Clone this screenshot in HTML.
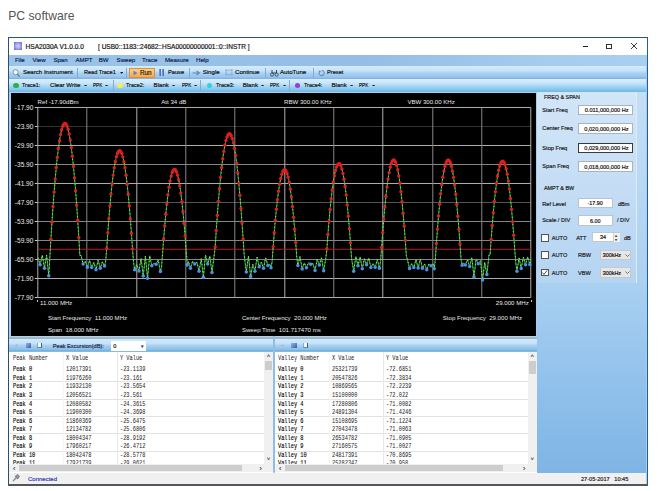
<!DOCTYPE html><html><head><meta charset="utf-8"><style>
html,body{margin:0;padding:0;}
body{width:661px;height:491px;overflow:hidden;position:relative;background:#fff;font-family:"Liberation Sans",sans-serif;}
.t{position:absolute;white-space:pre;-webkit-text-stroke:0.18px currentColor;}
.r{position:absolute;box-sizing:border-box;}
svg{position:absolute;}
</style></head><body>
<div class="t" style="left:8.20px;top:10.00px;font-size:12.2px;line-height:12.2px;color:#555;font-family:'Liberation Sans', sans-serif;font-weight:normal;-webkit-text-stroke:0;">PC software</div>
<div class="r" style="left:7.90px;top:37.00px;width:640.10px;height:449.00px;background:#a9cdef;border:1px solid #2a5878;border-left:1.5px solid #2a5070;border-right:1.8px solid #24608e;border-bottom:1px solid #505860;"></div>
<div class="r" style="left:9.00px;top:38.00px;width:638.00px;height:16.50px;background:#fff;"></div>
<div class="r" style="left:14.00px;top:42.00px;width:8.40px;height:7.90px;background:radial-gradient(circle,#d0d4fa 0%,#a4a8ee 45%,#7476dc 80%);"></div>
<div class="t" style="left:25.60px;top:44.00px;font-size:6.55px;line-height:6.55px;color:#111;font-family:'Liberation Sans', sans-serif;font-weight:normal;">HSA2030A V1.0.0.0</div>
<div class="t" style="left:98.00px;top:44.00px;font-size:6.55px;line-height:6.55px;color:#111;font-family:'Liberation Sans', sans-serif;font-weight:normal;">[ USB0::1183::24682::HSA00000000001::0::INSTR ]</div>
<div class="r" style="left:582.50px;top:46.00px;width:5.50px;height:1.00px;background:#222;"></div>
<div class="r" style="left:606.30px;top:43.50px;width:5.70px;height:5.50px;border:0.9px solid #333;"></div>
<svg style="left:630px;top:42px" width="8" height="8" viewBox="0 0 8 8"><path d="M1 1L7 7M7 1L1 7" stroke="#222" stroke-width="0.9"/></svg>
<div class="r" style="left:9.40px;top:54.60px;width:637.00px;height:11.70px;background:linear-gradient(to right,#9cc4ea,#94bee6 55%,#a6ccee 85%,#a8cef0);"></div>
<div class="t" style="left:14.90px;top:57.00px;font-size:6.1px;line-height:6.1px;color:#142448;font-family:'Liberation Sans', sans-serif;font-weight:normal;">File</div>
<div class="t" style="left:32.50px;top:57.00px;font-size:6.1px;line-height:6.1px;color:#142448;font-family:'Liberation Sans', sans-serif;font-weight:normal;">View</div>
<div class="t" style="left:53.40px;top:57.00px;font-size:6.1px;line-height:6.1px;color:#142448;font-family:'Liberation Sans', sans-serif;font-weight:normal;">Span</div>
<div class="t" style="left:75.50px;top:57.00px;font-size:6.1px;line-height:6.1px;color:#142448;font-family:'Liberation Sans', sans-serif;font-weight:normal;">AMPT</div>
<div class="t" style="left:98.80px;top:57.00px;font-size:6.1px;line-height:6.1px;color:#142448;font-family:'Liberation Sans', sans-serif;font-weight:normal;">BW</div>
<div class="t" style="left:116.60px;top:57.00px;font-size:6.1px;line-height:6.1px;color:#142448;font-family:'Liberation Sans', sans-serif;font-weight:normal;">Sweep</div>
<div class="t" style="left:142.00px;top:57.00px;font-size:6.1px;line-height:6.1px;color:#142448;font-family:'Liberation Sans', sans-serif;font-weight:normal;">Trace</div>
<div class="t" style="left:165.00px;top:57.00px;font-size:6.1px;line-height:6.1px;color:#142448;font-family:'Liberation Sans', sans-serif;font-weight:normal;">Measure</div>
<div class="t" style="left:196.00px;top:57.00px;font-size:6.1px;line-height:6.1px;color:#142448;font-family:'Liberation Sans', sans-serif;font-weight:normal;">Help</div>
<div class="r" style="left:9.40px;top:66.30px;width:637.00px;height:12.90px;background:linear-gradient(#d4ebfb 0%,#c6e3f9 35%,#a8d2f4 55%,#9ac7f0 80%,#80b2e0 100%);"></div>
<div class="r" style="left:9.40px;top:79.20px;width:637.00px;height:13.30px;background:linear-gradient(#dceefc 0%,#c8e6fa 30%,#a6d5f6 55%,#86c6ee 80%,#6cb8e4 100%);"></div>
<svg style="left:11px;top:68px" width="10" height="10" viewBox="0 0 10 10"><circle cx="4.6" cy="4.2" r="2.6" fill="#eef4fa" stroke="#7a8898" stroke-width="0.9"/><path d="M6.4 6.2L8.6 8.6" stroke="#6a7480" stroke-width="1.2"/></svg>
<div class="t" style="left:22.90px;top:69.00px;font-size:6.1px;line-height:6.1px;color:#111;font-family:'Liberation Sans', sans-serif;font-weight:normal;">Search Instrument</div>
<div class="r" style="left:77.30px;top:68.00px;width:0.60px;height:9.50px;background:#8aa8c8;"></div>
<div class="t" style="left:84.00px;top:69.00px;font-size:6.1px;line-height:6.1px;color:#111;font-family:'Liberation Sans', sans-serif;font-weight:normal;transform:scaleX(0.91);transform-origin:0 0;">Read Trace1</div>
<svg style="left:120.10px;top:71.75px" width="3.2" height="1.9" viewBox="0 0 3.2 1.9"><path d="M0 0H3.2L1.6 1.9Z" fill="#222"/></svg>
<div class="r" style="left:126.20px;top:68.00px;width:0.60px;height:9.50px;background:#8aa8c8;"></div>
<div class="r" style="left:129.00px;top:67.60px;width:26.00px;height:10.60px;background:linear-gradient(#fbcf8c,#f5a850);border:1px solid #d89040;"></div>
<svg style="left:132.5px;top:70px" width="5" height="6" viewBox="0 0 5 6"><path d="M0.5 0.5L4.5 3L0.5 5.5Z" fill="#6b7fd0"/></svg>
<div class="t" style="left:140.00px;top:70.00px;font-size:6.3px;line-height:6.3px;color:#2a1a00;font-family:'Liberation Sans', sans-serif;font-weight:normal;">Run</div>
<div class="r" style="left:158.80px;top:69.30px;width:2.00px;height:6.90px;background:linear-gradient(90deg,#8aa0d8,#4060a8);"></div>
<div class="r" style="left:161.80px;top:69.30px;width:2.00px;height:6.90px;background:linear-gradient(90deg,#8aa0d8,#4060a8);"></div>
<div class="t" style="left:167.60px;top:69.00px;font-size:6.1px;line-height:6.1px;color:#111;font-family:'Liberation Sans', sans-serif;font-weight:normal;transform:scaleX(0.93);transform-origin:0 0;">Pause</div>
<div class="r" style="left:188.50px;top:68.00px;width:0.60px;height:9.50px;background:#8aa8c8;"></div>
<svg style="left:192px;top:69.5px" width="9" height="6" viewBox="0 0 9 6"><path d="M0.5 3H6M4.5 1L7.5 3L4.5 5" stroke="#6080b8" stroke-width="1.1" fill="none"/></svg>
<div class="t" style="left:202.70px;top:69.00px;font-size:6.1px;line-height:6.1px;color:#111;font-family:'Liberation Sans', sans-serif;font-weight:normal;">Single</div>
<svg style="left:225px;top:69px" width="8" height="7" viewBox="0 0 8 7"><path d="M0.5 1.2H7.5M0.5 5.8H7.5M1.2 0.5V6.5M6.8 0.5V6.5" stroke="#7090c0" stroke-width="0.9" stroke-dasharray="1.2 0.8" fill="none"/></svg>
<div class="t" style="left:235.00px;top:69.00px;font-size:6.1px;line-height:6.1px;color:#111;font-family:'Liberation Sans', sans-serif;font-weight:normal;">Continue</div>
<div class="r" style="left:265.30px;top:68.00px;width:0.60px;height:9.50px;background:#8aa8c8;"></div>
<svg style="left:270px;top:68.5px" width="9" height="8" viewBox="0 0 9 8"><path d="M2 1V4M6.5 1V4M2 4H6.5" stroke="#3a4658" stroke-width="1" fill="none"/><circle cx="2" cy="5.6" r="1.6" fill="none" stroke="#3a4658" stroke-width="0.9"/><circle cx="6.6" cy="5.6" r="1.6" fill="none" stroke="#3a4658" stroke-width="0.9"/></svg>
<div class="t" style="left:280.00px;top:69.00px;font-size:6.1px;line-height:6.1px;color:#111;font-family:'Liberation Sans', sans-serif;font-weight:normal;">AutoTune</div>
<div class="r" style="left:312.50px;top:68.00px;width:0.60px;height:9.50px;background:#8aa8c8;"></div>
<svg style="left:317.5px;top:69px" width="7" height="8" viewBox="0 0 7 8"><path d="M3.5 1.5A2.6 2.6 0 1 1 1.2 3.2" stroke="#5a78b0" stroke-width="0.9" fill="none"/><path d="M0.5 1.5L1.5 3.6L3 2.2Z" fill="#5a78b0"/></svg>
<div class="t" style="left:326.70px;top:69.00px;font-size:6.1px;line-height:6.1px;color:#111;font-family:'Liberation Sans', sans-serif;font-weight:normal;transform:scaleX(0.93);transform-origin:0 0;">Preset</div>
<div class="r" style="left:13.40px;top:82.50px;width:5.60px;height:5.60px;border-radius:50%;background:#2ab24a;"></div>
<div class="t" style="left:22.00px;top:82.00px;font-size:6.1px;line-height:6.1px;color:#111;font-family:'Liberation Sans', sans-serif;font-weight:normal;transform:scaleX(0.89);transform-origin:0 0;">Trace1:</div>
<div class="t" style="left:50.00px;top:82.00px;font-size:6.1px;line-height:6.1px;color:#111;font-family:'Liberation Sans', sans-serif;font-weight:normal;">Clear Write</div>
<svg style="left:84.20px;top:84.55px" width="3.2" height="1.9" viewBox="0 0 3.2 1.9"><path d="M0 0H3.2L1.6 1.9Z" fill="#222"/></svg>
<div class="t" style="left:93.00px;top:82.00px;font-size:6.1px;line-height:6.1px;color:#111;font-family:'Liberation Sans', sans-serif;font-weight:normal;transform:scaleX(0.76);transform-origin:0 0;">PPK</div>
<svg style="left:105.40px;top:84.55px" width="3.2" height="1.9" viewBox="0 0 3.2 1.9"><path d="M0 0H3.2L1.6 1.9Z" fill="#222"/></svg>
<div class="r" style="left:112.80px;top:80.00px;width:0.60px;height:10.50px;background:#8aa8c8;"></div>
<div class="r" style="left:117.40px;top:82.50px;width:5.60px;height:5.60px;border-radius:50%;background:#f0ee60;"></div>
<div class="t" style="left:126.40px;top:82.00px;font-size:6.1px;line-height:6.1px;color:#111;font-family:'Liberation Sans', sans-serif;font-weight:normal;transform:scaleX(0.89);transform-origin:0 0;">Trace2:</div>
<div class="t" style="left:153.60px;top:82.00px;font-size:6.1px;line-height:6.1px;color:#111;font-family:'Liberation Sans', sans-serif;font-weight:normal;">Blank</div>
<svg style="left:172.40px;top:84.55px" width="3.2" height="1.9" viewBox="0 0 3.2 1.9"><path d="M0 0H3.2L1.6 1.9Z" fill="#222"/></svg>
<div class="t" style="left:181.80px;top:82.00px;font-size:6.1px;line-height:6.1px;color:#111;font-family:'Liberation Sans', sans-serif;font-weight:normal;transform:scaleX(0.76);transform-origin:0 0;">PPK</div>
<svg style="left:194.40px;top:84.55px" width="3.2" height="1.9" viewBox="0 0 3.2 1.9"><path d="M0 0H3.2L1.6 1.9Z" fill="#222"/></svg>
<div class="r" style="left:200.00px;top:80.00px;width:0.60px;height:10.50px;background:#8aa8c8;"></div>
<div class="r" style="left:206.60px;top:82.50px;width:5.60px;height:5.60px;border-radius:50%;background:#30d0e8;"></div>
<div class="t" style="left:215.50px;top:82.00px;font-size:6.1px;line-height:6.1px;color:#111;font-family:'Liberation Sans', sans-serif;font-weight:normal;transform:scaleX(0.89);transform-origin:0 0;">Trace3:</div>
<div class="t" style="left:242.70px;top:82.00px;font-size:6.1px;line-height:6.1px;color:#111;font-family:'Liberation Sans', sans-serif;font-weight:normal;">Blank</div>
<svg style="left:261.40px;top:84.55px" width="3.2" height="1.9" viewBox="0 0 3.2 1.9"><path d="M0 0H3.2L1.6 1.9Z" fill="#222"/></svg>
<div class="t" style="left:269.50px;top:82.00px;font-size:6.1px;line-height:6.1px;color:#111;font-family:'Liberation Sans', sans-serif;font-weight:normal;transform:scaleX(0.76);transform-origin:0 0;">PPK</div>
<svg style="left:282.90px;top:84.55px" width="3.2" height="1.9" viewBox="0 0 3.2 1.9"><path d="M0 0H3.2L1.6 1.9Z" fill="#222"/></svg>
<div class="r" style="left:289.30px;top:80.00px;width:0.60px;height:10.50px;background:#8aa8c8;"></div>
<div class="r" style="left:294.70px;top:82.50px;width:5.60px;height:5.60px;border-radius:50%;background:#9a3ae0;"></div>
<div class="t" style="left:304.00px;top:82.00px;font-size:6.1px;line-height:6.1px;color:#111;font-family:'Liberation Sans', sans-serif;font-weight:normal;transform:scaleX(0.89);transform-origin:0 0;">Trace4:</div>
<div class="t" style="left:331.50px;top:82.00px;font-size:6.1px;line-height:6.1px;color:#111;font-family:'Liberation Sans', sans-serif;font-weight:normal;">Blank</div>
<svg style="left:350.40px;top:84.55px" width="3.2" height="1.9" viewBox="0 0 3.2 1.9"><path d="M0 0H3.2L1.6 1.9Z" fill="#222"/></svg>
<div class="t" style="left:358.70px;top:82.00px;font-size:6.1px;line-height:6.1px;color:#111;font-family:'Liberation Sans', sans-serif;font-weight:normal;transform:scaleX(0.76);transform-origin:0 0;">PPK</div>
<svg style="left:372.00px;top:84.55px" width="3.2" height="1.9" viewBox="0 0 3.2 1.9"><path d="M0 0H3.2L1.6 1.9Z" fill="#222"/></svg>
<div class="r" style="left:10.90px;top:92.50px;width:525.10px;height:243.50px;background:#000;"></div>
<svg style="left:10.7px;top:92px" width="525.3" height="244.2" viewBox="10.7 92 525.3 244.2"><line x1="37.7" y1="107.5" x2="530.6" y2="107.5" stroke="#b0b0b0" stroke-width="1"/><line x1="34.5" y1="107.5" x2="37.7" y2="107.5" stroke="#c8c8c8" stroke-width="1"/><line x1="37.7" y1="126.5" x2="530.6" y2="126.5" stroke="#333333" stroke-width="1"/><line x1="34.5" y1="126.5" x2="37.7" y2="126.5" stroke="#c8c8c8" stroke-width="1"/><line x1="37.7" y1="145.5" x2="530.6" y2="145.5" stroke="#b0b0b0" stroke-width="1"/><line x1="34.5" y1="145.5" x2="37.7" y2="145.5" stroke="#c8c8c8" stroke-width="1"/><line x1="37.7" y1="164.5" x2="530.6" y2="164.5" stroke="#888888" stroke-width="1"/><line x1="34.5" y1="164.5" x2="37.7" y2="164.5" stroke="#c8c8c8" stroke-width="1"/><line x1="37.7" y1="183.5" x2="530.6" y2="183.5" stroke="#b0b0b0" stroke-width="1"/><line x1="34.5" y1="183.5" x2="37.7" y2="183.5" stroke="#c8c8c8" stroke-width="1"/><line x1="37.7" y1="202.5" x2="530.6" y2="202.5" stroke="#555555" stroke-width="1"/><line x1="34.5" y1="202.5" x2="37.7" y2="202.5" stroke="#c8c8c8" stroke-width="1"/><line x1="37.7" y1="221.5" x2="530.6" y2="221.5" stroke="#888888" stroke-width="1"/><line x1="34.5" y1="221.5" x2="37.7" y2="221.5" stroke="#c8c8c8" stroke-width="1"/><line x1="37.7" y1="240.5" x2="530.6" y2="240.5" stroke="#888888" stroke-width="1"/><line x1="34.5" y1="240.5" x2="37.7" y2="240.5" stroke="#c8c8c8" stroke-width="1"/><line x1="37.7" y1="259.5" x2="530.6" y2="259.5" stroke="#888888" stroke-width="1"/><line x1="34.5" y1="259.5" x2="37.7" y2="259.5" stroke="#c8c8c8" stroke-width="1"/><line x1="37.7" y1="278.5" x2="530.6" y2="278.5" stroke="#b0b0b0" stroke-width="1"/><line x1="34.5" y1="278.5" x2="37.7" y2="278.5" stroke="#c8c8c8" stroke-width="1"/><line x1="37.7" y1="297.5" x2="530.6" y2="297.5" stroke="#b0b0b0" stroke-width="1"/><line x1="34.5" y1="297.5" x2="37.7" y2="297.5" stroke="#c8c8c8" stroke-width="1"/><line x1="37.5" y1="107.5" x2="37.5" y2="297.5" stroke="#b0b0b0" stroke-width="1"/><line x1="86.5" y1="107.5" x2="86.5" y2="297.5" stroke="#888888" stroke-width="1"/><line x1="136.5" y1="107.5" x2="136.5" y2="297.5" stroke="#b0b0b0" stroke-width="1"/><line x1="185.5" y1="107.5" x2="185.5" y2="297.5" stroke="#888888" stroke-width="1"/><line x1="234.5" y1="107.5" x2="234.5" y2="297.5" stroke="#888888" stroke-width="1"/><line x1="284.5" y1="107.5" x2="284.5" y2="297.5" stroke="#b0b0b0" stroke-width="1"/><line x1="333.5" y1="107.5" x2="333.5" y2="297.5" stroke="#888888" stroke-width="1"/><line x1="382.5" y1="107.5" x2="382.5" y2="297.5" stroke="#b0b0b0" stroke-width="1"/><line x1="432.5" y1="107.5" x2="432.5" y2="297.5" stroke="#888888" stroke-width="1"/><line x1="481.5" y1="107.5" x2="481.5" y2="297.5" stroke="#888888" stroke-width="1"/><line x1="530.5" y1="107.5" x2="530.5" y2="297.5" stroke="#b0b0b0" stroke-width="1"/><line x1="37.7" y1="249.3" x2="530.6" y2="249.3" stroke="#b81818" stroke-width="1.1"/><path d="M37.70 257.74 L38.77 261.30 L39.85 264.86 L40.92 260.04 L42.00 255.22 L43.07 261.77 L44.14 268.32 L45.22 261.70 L46.29 255.08 L47.36 265.42 L48.44 275.75 L49.51 257.70 L50.59 239.27 L51.66 222.19 L52.73 206.47 L53.81 192.12 L54.88 179.12 L55.96 167.49 L57.03 157.22 L58.10 148.30 L59.18 140.75 L60.25 134.56 L61.32 129.73 L62.40 126.26 L63.47 124.15 L64.55 123.40 L65.62 124.01 L66.69 125.99 L67.77 129.32 L68.84 134.02 L69.92 140.07 L70.99 147.49 L72.06 156.26 L73.14 166.40 L74.21 177.90 L75.28 190.76 L76.36 204.98 L77.43 220.56 L78.51 237.50 L79.58 255.80 L80.65 255.13 L81.73 259.58 L82.80 264.04 L83.88 262.67 L84.95 261.30 L86.02 264.33 L87.10 267.35 L88.17 263.85 L89.25 260.36 L90.32 263.97 L91.39 267.58 L92.47 265.01 L93.54 262.44 L94.61 266.12 L95.69 269.79 L96.76 265.02 L97.84 260.24 L98.91 264.24 L99.98 268.23 L101.06 265.01 L102.13 261.79 L103.21 263.94 L104.28 266.09 L105.35 260.89 L106.43 248.47 L107.50 232.84 L108.57 218.57 L109.65 205.66 L110.72 194.11 L111.80 183.92 L112.87 175.09 L113.94 167.63 L115.02 161.52 L116.09 156.77 L117.17 153.39 L118.24 151.36 L119.31 150.70 L120.39 151.40 L121.46 153.45 L122.53 156.87 L123.61 161.65 L124.68 167.79 L125.76 175.29 L126.83 184.15 L127.90 194.38 L128.98 205.96 L130.05 218.90 L131.13 233.21 L132.20 248.87 L133.27 262.46 L134.35 269.81 L135.42 267.12 L136.49 264.43 L137.57 267.66 L138.64 270.90 L139.72 264.63 L140.79 258.36 L141.86 267.16 L142.94 275.96 L144.01 266.07 L145.09 256.18 L146.16 267.22 L147.23 278.26 L148.31 267.03 L149.38 255.79 L150.45 260.76 L151.53 265.73 L152.60 264.47 L153.68 263.21 L154.75 263.72 L155.82 264.23 L156.90 262.11 L157.97 259.99 L159.05 265.72 L160.12 271.45 L161.19 267.30 L162.27 253.51 L163.34 239.07 L164.42 225.99 L165.49 214.27 L166.56 203.91 L167.64 194.92 L168.71 187.28 L169.78 181.00 L170.86 176.09 L171.93 172.53 L173.01 170.34 L174.08 169.51 L175.15 170.04 L176.23 171.93 L177.30 175.17 L178.38 179.78 L179.45 185.76 L180.52 193.09 L181.60 201.78 L182.67 211.83 L183.74 223.25 L184.82 236.02 L185.89 250.16 L186.97 265.00 L188.04 261.40 L189.11 264.77 L190.19 268.14 L191.26 264.70 L192.34 261.26 L193.41 262.62 L194.48 263.99 L195.56 263.14 L196.63 262.30 L197.70 266.84 L198.78 271.37 L199.85 264.90 L200.93 258.42 L202.00 267.84 L203.07 277.26 L204.15 266.19 L205.22 255.12 L206.30 259.61 L207.37 264.11 L208.44 260.11 L209.52 256.12 L210.59 264.31 L211.66 272.50 L212.74 264.26 L213.81 256.01 L214.89 246.84 L215.96 230.39 L217.03 215.23 L218.11 201.36 L219.18 188.79 L220.26 177.51 L221.33 167.51 L222.40 158.81 L223.48 151.41 L224.55 145.29 L225.62 140.46 L226.70 136.93 L227.77 134.69 L228.85 133.74 L229.92 134.08 L230.99 135.71 L232.07 138.63 L233.14 142.85 L234.22 148.36 L235.29 155.15 L236.36 163.24 L237.44 172.63 L238.51 183.30 L239.58 195.26 L240.66 208.52 L241.73 223.07 L242.81 238.91 L243.88 254.73 L244.95 263.39 L246.03 272.06 L247.10 264.01 L248.18 255.97 L249.25 266.21 L250.32 276.46 L251.40 270.37 L252.47 264.29 L253.55 267.78 L254.62 271.27 L255.69 264.19 L256.77 257.11 L257.84 261.96 L258.91 266.80 L259.99 264.51 L261.06 262.22 L262.14 265.26 L263.21 268.29 L264.28 263.04 L265.36 257.80 L266.43 261.65 L267.51 265.51 L268.58 264.93 L269.65 264.35 L270.73 267.76 L271.80 261.78 L272.87 246.62 L273.95 232.82 L275.02 220.39 L276.10 209.31 L277.17 199.59 L278.24 191.24 L279.32 184.25 L280.39 178.61 L281.47 174.34 L282.54 171.43 L283.61 169.88 L284.69 169.69 L285.76 170.86 L286.83 173.39 L287.91 177.28 L288.98 182.54 L290.06 189.15 L291.13 197.12 L292.20 206.46 L293.28 217.15 L294.35 229.21 L295.43 242.63 L296.50 257.41 L297.57 265.54 L298.65 261.04 L299.72 256.54 L300.79 262.83 L301.87 269.12 L302.94 266.01 L304.02 262.90 L305.09 265.36 L306.16 267.82 L307.24 265.16 L308.31 262.50 L309.39 263.38 L310.46 264.26 L311.53 263.93 L312.61 263.60 L313.68 267.07 L314.75 270.54 L315.83 264.91 L316.90 259.28 L317.98 262.19 L319.05 265.11 L320.12 261.47 L321.20 257.83 L322.27 264.27 L323.35 270.71 L324.42 264.58 L325.49 258.46 L326.57 249.02 L327.64 234.46 L328.72 221.25 L329.79 209.41 L330.86 198.92 L331.94 189.80 L333.01 182.03 L334.08 175.63 L335.16 170.59 L336.23 166.91 L337.31 164.59 L338.38 163.63 L339.45 164.03 L340.53 165.79 L341.60 168.91 L342.68 173.40 L343.75 179.24 L344.82 186.45 L345.90 195.01 L346.97 204.94 L348.04 216.23 L349.12 228.87 L350.19 242.88 L351.27 258.25 L352.34 265.09 L353.41 271.35 L354.49 263.98 L355.56 256.61 L356.64 261.19 L357.71 265.77 L358.78 261.34 L359.86 256.91 L360.93 262.84 L362.00 268.78 L363.08 263.73 L364.15 258.69 L365.23 261.68 L366.30 264.68 L367.37 261.36 L368.45 258.04 L369.52 262.83 L370.60 267.62 L371.67 265.58 L372.74 263.54 L373.82 265.41 L374.89 267.29 L375.96 263.40 L377.04 259.52 L378.11 263.90 L379.19 268.29 L380.26 261.49 L381.33 247.35 L382.41 232.50 L383.48 219.02 L384.56 206.93 L385.63 196.23 L386.70 186.91 L387.78 178.97 L388.85 172.42 L389.92 167.25 L391.00 163.46 L392.07 161.06 L393.15 160.04 L394.22 160.40 L395.29 162.15 L396.37 165.29 L397.44 169.80 L398.52 175.70 L399.59 182.99 L400.66 191.65 L401.74 201.71 L402.81 213.14 L403.88 225.96 L404.96 240.16 L406.03 255.75 L407.11 259.58 L408.18 264.07 L409.25 268.56 L410.33 266.09 L411.40 263.62 L412.48 265.56 L413.55 267.49 L414.62 263.52 L415.70 259.56 L416.77 263.83 L417.85 268.11 L418.92 263.57 L419.99 259.02 L421.07 263.66 L422.14 268.30 L423.21 266.11 L424.29 263.92 L425.36 266.85 L426.44 269.79 L427.51 266.86 L428.58 263.92 L429.66 264.88 L430.73 265.84 L431.81 264.88 L432.88 263.93 L433.95 268.67 L435.03 259.43 L436.10 243.53 L437.17 229.02 L438.25 215.89 L439.32 204.15 L440.40 193.79 L441.47 184.81 L442.54 177.21 L443.62 171.00 L444.69 166.18 L445.77 162.73 L446.84 160.68 L447.91 160.00 L448.99 160.71 L450.06 162.80 L451.13 166.28 L452.21 171.14 L453.28 177.38 L454.36 185.01 L455.43 194.02 L456.50 204.42 L457.58 216.20 L458.65 229.36 L459.73 243.91 L460.80 259.84 L461.87 265.35 L462.95 262.82 L464.02 263.89 L465.09 264.95 L466.17 262.30 L467.24 259.66 L468.32 263.10 L469.39 266.55 L470.46 262.12 L471.54 257.69 L472.61 267.17 L473.69 276.66 L474.76 267.78 L475.83 258.90 L476.91 261.28 L477.98 263.66 L479.05 262.20 L480.13 260.74 L481.20 270.31 L482.28 279.89 L483.35 271.14 L484.42 262.38 L485.50 268.44 L486.57 274.49 L487.65 264.69 L488.72 254.90 L489.79 254.95 L490.87 239.52 L491.94 225.48 L493.02 212.83 L494.09 201.55 L495.16 191.66 L496.24 183.16 L497.31 176.04 L498.38 170.30 L499.46 165.95 L500.53 162.98 L501.61 161.39 L502.68 161.19 L503.75 162.37 L504.83 164.93 L505.90 168.88 L506.98 174.21 L508.05 180.93 L509.12 189.03 L510.20 198.52 L511.27 209.38 L512.34 221.63 L513.42 235.27 L514.49 250.29 L515.57 263.22 L516.64 271.26 L517.71 264.58 L518.79 257.89 L519.86 263.18 L520.94 268.48 L522.01 262.83 L523.08 257.18 L524.16 260.92 L525.23 264.66 L526.30 260.77 L527.38 256.88 L528.45 260.68 L529.53 264.49 L530.60 259.74" fill="none" stroke="#30c030" stroke-width="0.9"/><path d="M37.70 257.74 L38.77 261.30 L39.85 264.86 L40.92 260.04 L42.00 255.22 L43.07 261.77 L44.14 268.32 L45.22 261.70 L46.29 255.08 L47.36 265.42 L48.44 275.75 L49.51 257.70 L50.59 239.27 L51.66 222.19 L52.73 206.47 L53.81 192.12 L54.88 179.12 L55.96 167.49 L57.03 157.22 L58.10 148.30 L59.18 140.75 L60.25 134.56 L61.32 129.73 L62.40 126.26 L63.47 124.15 L64.55 123.40 L65.62 124.01 L66.69 125.99 L67.77 129.32 L68.84 134.02 L69.92 140.07 L70.99 147.49 L72.06 156.26 L73.14 166.40 L74.21 177.90 L75.28 190.76 L76.36 204.98 L77.43 220.56 L78.51 237.50 L79.58 255.80 L80.65 255.13 L81.73 259.58 L82.80 264.04 L83.88 262.67 L84.95 261.30 L86.02 264.33 L87.10 267.35 L88.17 263.85 L89.25 260.36 L90.32 263.97 L91.39 267.58 L92.47 265.01 L93.54 262.44 L94.61 266.12 L95.69 269.79 L96.76 265.02 L97.84 260.24 L98.91 264.24 L99.98 268.23 L101.06 265.01 L102.13 261.79 L103.21 263.94 L104.28 266.09 L105.35 260.89 L106.43 248.47 L107.50 232.84 L108.57 218.57 L109.65 205.66 L110.72 194.11 L111.80 183.92 L112.87 175.09 L113.94 167.63 L115.02 161.52 L116.09 156.77 L117.17 153.39 L118.24 151.36 L119.31 150.70 L120.39 151.40 L121.46 153.45 L122.53 156.87 L123.61 161.65 L124.68 167.79 L125.76 175.29 L126.83 184.15 L127.90 194.38 L128.98 205.96 L130.05 218.90 L131.13 233.21 L132.20 248.87 L133.27 262.46 L134.35 269.81 L135.42 267.12 L136.49 264.43 L137.57 267.66 L138.64 270.90 L139.72 264.63 L140.79 258.36 L141.86 267.16 L142.94 275.96 L144.01 266.07 L145.09 256.18 L146.16 267.22 L147.23 278.26 L148.31 267.03 L149.38 255.79 L150.45 260.76 L151.53 265.73 L152.60 264.47 L153.68 263.21 L154.75 263.72 L155.82 264.23 L156.90 262.11 L157.97 259.99 L159.05 265.72 L160.12 271.45 L161.19 267.30 L162.27 253.51 L163.34 239.07 L164.42 225.99 L165.49 214.27 L166.56 203.91 L167.64 194.92 L168.71 187.28 L169.78 181.00 L170.86 176.09 L171.93 172.53 L173.01 170.34 L174.08 169.51 L175.15 170.04 L176.23 171.93 L177.30 175.17 L178.38 179.78 L179.45 185.76 L180.52 193.09 L181.60 201.78 L182.67 211.83 L183.74 223.25 L184.82 236.02 L185.89 250.16 L186.97 265.00 L188.04 261.40 L189.11 264.77 L190.19 268.14 L191.26 264.70 L192.34 261.26 L193.41 262.62 L194.48 263.99 L195.56 263.14 L196.63 262.30 L197.70 266.84 L198.78 271.37 L199.85 264.90 L200.93 258.42 L202.00 267.84 L203.07 277.26 L204.15 266.19 L205.22 255.12 L206.30 259.61 L207.37 264.11 L208.44 260.11 L209.52 256.12 L210.59 264.31 L211.66 272.50 L212.74 264.26 L213.81 256.01 L214.89 246.84 L215.96 230.39 L217.03 215.23 L218.11 201.36 L219.18 188.79 L220.26 177.51 L221.33 167.51 L222.40 158.81 L223.48 151.41 L224.55 145.29 L225.62 140.46 L226.70 136.93 L227.77 134.69 L228.85 133.74 L229.92 134.08 L230.99 135.71 L232.07 138.63 L233.14 142.85 L234.22 148.36 L235.29 155.15 L236.36 163.24 L237.44 172.63 L238.51 183.30 L239.58 195.26 L240.66 208.52 L241.73 223.07 L242.81 238.91 L243.88 254.73 L244.95 263.39 L246.03 272.06 L247.10 264.01 L248.18 255.97 L249.25 266.21 L250.32 276.46 L251.40 270.37 L252.47 264.29 L253.55 267.78 L254.62 271.27 L255.69 264.19 L256.77 257.11 L257.84 261.96 L258.91 266.80 L259.99 264.51 L261.06 262.22 L262.14 265.26 L263.21 268.29 L264.28 263.04 L265.36 257.80 L266.43 261.65 L267.51 265.51 L268.58 264.93 L269.65 264.35 L270.73 267.76 L271.80 261.78 L272.87 246.62 L273.95 232.82 L275.02 220.39 L276.10 209.31 L277.17 199.59 L278.24 191.24 L279.32 184.25 L280.39 178.61 L281.47 174.34 L282.54 171.43 L283.61 169.88 L284.69 169.69 L285.76 170.86 L286.83 173.39 L287.91 177.28 L288.98 182.54 L290.06 189.15 L291.13 197.12 L292.20 206.46 L293.28 217.15 L294.35 229.21 L295.43 242.63 L296.50 257.41 L297.57 265.54 L298.65 261.04 L299.72 256.54 L300.79 262.83 L301.87 269.12 L302.94 266.01 L304.02 262.90 L305.09 265.36 L306.16 267.82 L307.24 265.16 L308.31 262.50 L309.39 263.38 L310.46 264.26 L311.53 263.93 L312.61 263.60 L313.68 267.07 L314.75 270.54 L315.83 264.91 L316.90 259.28 L317.98 262.19 L319.05 265.11 L320.12 261.47 L321.20 257.83 L322.27 264.27 L323.35 270.71 L324.42 264.58 L325.49 258.46 L326.57 249.02 L327.64 234.46 L328.72 221.25 L329.79 209.41 L330.86 198.92 L331.94 189.80 L333.01 182.03 L334.08 175.63 L335.16 170.59 L336.23 166.91 L337.31 164.59 L338.38 163.63 L339.45 164.03 L340.53 165.79 L341.60 168.91 L342.68 173.40 L343.75 179.24 L344.82 186.45 L345.90 195.01 L346.97 204.94 L348.04 216.23 L349.12 228.87 L350.19 242.88 L351.27 258.25 L352.34 265.09 L353.41 271.35 L354.49 263.98 L355.56 256.61 L356.64 261.19 L357.71 265.77 L358.78 261.34 L359.86 256.91 L360.93 262.84 L362.00 268.78 L363.08 263.73 L364.15 258.69 L365.23 261.68 L366.30 264.68 L367.37 261.36 L368.45 258.04 L369.52 262.83 L370.60 267.62 L371.67 265.58 L372.74 263.54 L373.82 265.41 L374.89 267.29 L375.96 263.40 L377.04 259.52 L378.11 263.90 L379.19 268.29 L380.26 261.49 L381.33 247.35 L382.41 232.50 L383.48 219.02 L384.56 206.93 L385.63 196.23 L386.70 186.91 L387.78 178.97 L388.85 172.42 L389.92 167.25 L391.00 163.46 L392.07 161.06 L393.15 160.04 L394.22 160.40 L395.29 162.15 L396.37 165.29 L397.44 169.80 L398.52 175.70 L399.59 182.99 L400.66 191.65 L401.74 201.71 L402.81 213.14 L403.88 225.96 L404.96 240.16 L406.03 255.75 L407.11 259.58 L408.18 264.07 L409.25 268.56 L410.33 266.09 L411.40 263.62 L412.48 265.56 L413.55 267.49 L414.62 263.52 L415.70 259.56 L416.77 263.83 L417.85 268.11 L418.92 263.57 L419.99 259.02 L421.07 263.66 L422.14 268.30 L423.21 266.11 L424.29 263.92 L425.36 266.85 L426.44 269.79 L427.51 266.86 L428.58 263.92 L429.66 264.88 L430.73 265.84 L431.81 264.88 L432.88 263.93 L433.95 268.67 L435.03 259.43 L436.10 243.53 L437.17 229.02 L438.25 215.89 L439.32 204.15 L440.40 193.79 L441.47 184.81 L442.54 177.21 L443.62 171.00 L444.69 166.18 L445.77 162.73 L446.84 160.68 L447.91 160.00 L448.99 160.71 L450.06 162.80 L451.13 166.28 L452.21 171.14 L453.28 177.38 L454.36 185.01 L455.43 194.02 L456.50 204.42 L457.58 216.20 L458.65 229.36 L459.73 243.91 L460.80 259.84 L461.87 265.35 L462.95 262.82 L464.02 263.89 L465.09 264.95 L466.17 262.30 L467.24 259.66 L468.32 263.10 L469.39 266.55 L470.46 262.12 L471.54 257.69 L472.61 267.17 L473.69 276.66 L474.76 267.78 L475.83 258.90 L476.91 261.28 L477.98 263.66 L479.05 262.20 L480.13 260.74 L481.20 270.31 L482.28 279.89 L483.35 271.14 L484.42 262.38 L485.50 268.44 L486.57 274.49 L487.65 264.69 L488.72 254.90 L489.79 254.95 L490.87 239.52 L491.94 225.48 L493.02 212.83 L494.09 201.55 L495.16 191.66 L496.24 183.16 L497.31 176.04 L498.38 170.30 L499.46 165.95 L500.53 162.98 L501.61 161.39 L502.68 161.19 L503.75 162.37 L504.83 164.93 L505.90 168.88 L506.98 174.21 L508.05 180.93 L509.12 189.03 L510.20 198.52 L511.27 209.38 L512.34 221.63 L513.42 235.27 L514.49 250.29 L515.57 263.22 L516.64 271.26 L517.71 264.58 L518.79 257.89 L519.86 263.18 L520.94 268.48 L522.01 262.83 L523.08 257.18 L524.16 260.92 L525.23 264.66 L526.30 260.77 L527.38 256.88 L528.45 260.68 L529.53 264.49 L530.60 259.74" fill="none" stroke="#c8f8c0" stroke-width="0.7" stroke-dasharray="1.2 2.4"/><circle cx="39.85" cy="264.86" r="1.75" fill="#4890e8"/><circle cx="44.14" cy="268.32" r="1.75" fill="#4890e8"/><circle cx="48.44" cy="275.75" r="1.75" fill="#4890e8"/><circle cx="82.80" cy="264.04" r="1.75" fill="#4890e8"/><circle cx="87.10" cy="267.35" r="1.75" fill="#4890e8"/><circle cx="91.39" cy="267.58" r="1.75" fill="#4890e8"/><circle cx="95.69" cy="269.79" r="1.75" fill="#4890e8"/><circle cx="99.98" cy="268.23" r="1.75" fill="#4890e8"/><circle cx="104.28" cy="266.09" r="1.75" fill="#4890e8"/><circle cx="134.35" cy="269.81" r="1.75" fill="#4890e8"/><circle cx="138.64" cy="270.90" r="1.75" fill="#4890e8"/><circle cx="142.94" cy="275.96" r="1.75" fill="#4890e8"/><circle cx="147.23" cy="278.26" r="1.75" fill="#4890e8"/><circle cx="151.53" cy="265.73" r="1.75" fill="#4890e8"/><circle cx="155.82" cy="264.23" r="1.75" fill="#4890e8"/><circle cx="160.12" cy="271.45" r="1.75" fill="#4890e8"/><circle cx="186.97" cy="265.00" r="1.75" fill="#4890e8"/><circle cx="190.19" cy="268.14" r="1.75" fill="#4890e8"/><circle cx="194.48" cy="263.99" r="1.75" fill="#4890e8"/><circle cx="198.78" cy="271.37" r="1.75" fill="#4890e8"/><circle cx="203.07" cy="277.26" r="1.75" fill="#4890e8"/><circle cx="207.37" cy="264.11" r="1.75" fill="#4890e8"/><circle cx="211.66" cy="272.50" r="1.75" fill="#4890e8"/><circle cx="246.03" cy="272.06" r="1.75" fill="#4890e8"/><circle cx="250.32" cy="276.46" r="1.75" fill="#4890e8"/><circle cx="254.62" cy="271.27" r="1.75" fill="#4890e8"/><circle cx="258.91" cy="266.80" r="1.75" fill="#4890e8"/><circle cx="263.21" cy="268.29" r="1.75" fill="#4890e8"/><circle cx="267.51" cy="265.51" r="1.75" fill="#4890e8"/><circle cx="270.73" cy="267.76" r="1.75" fill="#4890e8"/><circle cx="297.57" cy="265.54" r="1.75" fill="#4890e8"/><circle cx="301.87" cy="269.12" r="1.75" fill="#4890e8"/><circle cx="306.16" cy="267.82" r="1.75" fill="#4890e8"/><circle cx="310.46" cy="264.26" r="1.75" fill="#4890e8"/><circle cx="314.75" cy="270.54" r="1.75" fill="#4890e8"/><circle cx="319.05" cy="265.11" r="1.75" fill="#4890e8"/><circle cx="323.35" cy="270.71" r="1.75" fill="#4890e8"/><circle cx="353.41" cy="271.35" r="1.75" fill="#4890e8"/><circle cx="357.71" cy="265.77" r="1.75" fill="#4890e8"/><circle cx="362.00" cy="268.78" r="1.75" fill="#4890e8"/><circle cx="366.30" cy="264.68" r="1.75" fill="#4890e8"/><circle cx="370.60" cy="267.62" r="1.75" fill="#4890e8"/><circle cx="374.89" cy="267.29" r="1.75" fill="#4890e8"/><circle cx="379.19" cy="268.29" r="1.75" fill="#4890e8"/><circle cx="409.25" cy="268.56" r="1.75" fill="#4890e8"/><circle cx="413.55" cy="267.49" r="1.75" fill="#4890e8"/><circle cx="417.85" cy="268.11" r="1.75" fill="#4890e8"/><circle cx="422.14" cy="268.30" r="1.75" fill="#4890e8"/><circle cx="426.44" cy="269.79" r="1.75" fill="#4890e8"/><circle cx="430.73" cy="265.84" r="1.75" fill="#4890e8"/><circle cx="433.95" cy="268.67" r="1.75" fill="#4890e8"/><circle cx="461.87" cy="265.35" r="1.75" fill="#4890e8"/><circle cx="465.09" cy="264.95" r="1.75" fill="#4890e8"/><circle cx="469.39" cy="266.55" r="1.75" fill="#4890e8"/><circle cx="473.69" cy="276.66" r="1.75" fill="#4890e8"/><circle cx="477.98" cy="263.66" r="1.75" fill="#4890e8"/><circle cx="482.28" cy="279.89" r="1.75" fill="#4890e8"/><circle cx="486.57" cy="274.49" r="1.75" fill="#4890e8"/><circle cx="516.64" cy="271.26" r="1.75" fill="#4890e8"/><circle cx="520.94" cy="268.48" r="1.75" fill="#4890e8"/><circle cx="525.23" cy="264.66" r="1.75" fill="#4890e8"/><circle cx="529.53" cy="264.49" r="1.75" fill="#4890e8"/><circle cx="50.59" cy="239.27" r="1.7" fill="#e01e1e"/><circle cx="51.66" cy="222.19" r="1.7" fill="#e01e1e"/><circle cx="52.73" cy="206.47" r="1.7" fill="#e01e1e"/><circle cx="53.81" cy="192.12" r="1.7" fill="#e01e1e"/><circle cx="54.88" cy="179.12" r="1.7" fill="#e01e1e"/><circle cx="55.96" cy="167.49" r="1.7" fill="#e01e1e"/><circle cx="57.03" cy="157.22" r="1.7" fill="#e01e1e"/><circle cx="58.10" cy="148.30" r="1.7" fill="#e01e1e"/><circle cx="59.18" cy="140.75" r="1.7" fill="#e01e1e"/><circle cx="60.25" cy="134.56" r="1.7" fill="#e01e1e"/><circle cx="61.32" cy="129.73" r="1.7" fill="#e01e1e"/><circle cx="62.40" cy="126.26" r="1.7" fill="#e01e1e"/><circle cx="63.47" cy="124.15" r="1.7" fill="#e01e1e"/><circle cx="64.55" cy="123.40" r="1.7" fill="#e01e1e"/><circle cx="65.62" cy="124.01" r="1.7" fill="#e01e1e"/><circle cx="66.69" cy="125.99" r="1.7" fill="#e01e1e"/><circle cx="67.77" cy="129.32" r="1.7" fill="#e01e1e"/><circle cx="68.84" cy="134.02" r="1.7" fill="#e01e1e"/><circle cx="69.92" cy="140.07" r="1.7" fill="#e01e1e"/><circle cx="70.99" cy="147.49" r="1.7" fill="#e01e1e"/><circle cx="72.06" cy="156.26" r="1.7" fill="#e01e1e"/><circle cx="73.14" cy="166.40" r="1.7" fill="#e01e1e"/><circle cx="74.21" cy="177.90" r="1.7" fill="#e01e1e"/><circle cx="75.28" cy="190.76" r="1.7" fill="#e01e1e"/><circle cx="76.36" cy="204.98" r="1.7" fill="#e01e1e"/><circle cx="77.43" cy="220.56" r="1.7" fill="#e01e1e"/><circle cx="78.51" cy="237.50" r="1.7" fill="#e01e1e"/><circle cx="106.43" cy="248.47" r="1.7" fill="#e01e1e"/><circle cx="107.50" cy="232.84" r="1.7" fill="#e01e1e"/><circle cx="108.57" cy="218.57" r="1.7" fill="#e01e1e"/><circle cx="109.65" cy="205.66" r="1.7" fill="#e01e1e"/><circle cx="110.72" cy="194.11" r="1.7" fill="#e01e1e"/><circle cx="111.80" cy="183.92" r="1.7" fill="#e01e1e"/><circle cx="112.87" cy="175.09" r="1.7" fill="#e01e1e"/><circle cx="113.94" cy="167.63" r="1.7" fill="#e01e1e"/><circle cx="115.02" cy="161.52" r="1.7" fill="#e01e1e"/><circle cx="116.09" cy="156.77" r="1.7" fill="#e01e1e"/><circle cx="117.17" cy="153.39" r="1.7" fill="#e01e1e"/><circle cx="118.24" cy="151.36" r="1.7" fill="#e01e1e"/><circle cx="119.31" cy="150.70" r="1.7" fill="#e01e1e"/><circle cx="120.39" cy="151.40" r="1.7" fill="#e01e1e"/><circle cx="121.46" cy="153.45" r="1.7" fill="#e01e1e"/><circle cx="122.53" cy="156.87" r="1.7" fill="#e01e1e"/><circle cx="123.61" cy="161.65" r="1.7" fill="#e01e1e"/><circle cx="124.68" cy="167.79" r="1.7" fill="#e01e1e"/><circle cx="125.76" cy="175.29" r="1.7" fill="#e01e1e"/><circle cx="126.83" cy="184.15" r="1.7" fill="#e01e1e"/><circle cx="127.90" cy="194.38" r="1.7" fill="#e01e1e"/><circle cx="128.98" cy="205.96" r="1.7" fill="#e01e1e"/><circle cx="130.05" cy="218.90" r="1.7" fill="#e01e1e"/><circle cx="131.13" cy="233.21" r="1.7" fill="#e01e1e"/><circle cx="132.20" cy="248.87" r="1.7" fill="#e01e1e"/><circle cx="163.34" cy="239.07" r="1.7" fill="#e01e1e"/><circle cx="164.42" cy="225.99" r="1.7" fill="#e01e1e"/><circle cx="165.49" cy="214.27" r="1.7" fill="#e01e1e"/><circle cx="166.56" cy="203.91" r="1.7" fill="#e01e1e"/><circle cx="167.64" cy="194.92" r="1.7" fill="#e01e1e"/><circle cx="168.71" cy="187.28" r="1.7" fill="#e01e1e"/><circle cx="169.78" cy="181.00" r="1.7" fill="#e01e1e"/><circle cx="170.86" cy="176.09" r="1.7" fill="#e01e1e"/><circle cx="171.93" cy="172.53" r="1.7" fill="#e01e1e"/><circle cx="173.01" cy="170.34" r="1.7" fill="#e01e1e"/><circle cx="174.08" cy="169.51" r="1.7" fill="#e01e1e"/><circle cx="175.15" cy="170.04" r="1.7" fill="#e01e1e"/><circle cx="176.23" cy="171.93" r="1.7" fill="#e01e1e"/><circle cx="177.30" cy="175.17" r="1.7" fill="#e01e1e"/><circle cx="178.38" cy="179.78" r="1.7" fill="#e01e1e"/><circle cx="179.45" cy="185.76" r="1.7" fill="#e01e1e"/><circle cx="180.52" cy="193.09" r="1.7" fill="#e01e1e"/><circle cx="181.60" cy="201.78" r="1.7" fill="#e01e1e"/><circle cx="182.67" cy="211.83" r="1.7" fill="#e01e1e"/><circle cx="183.74" cy="223.25" r="1.7" fill="#e01e1e"/><circle cx="184.82" cy="236.02" r="1.7" fill="#e01e1e"/><circle cx="214.89" cy="246.84" r="1.7" fill="#e01e1e"/><circle cx="215.96" cy="230.39" r="1.7" fill="#e01e1e"/><circle cx="217.03" cy="215.23" r="1.7" fill="#e01e1e"/><circle cx="218.11" cy="201.36" r="1.7" fill="#e01e1e"/><circle cx="219.18" cy="188.79" r="1.7" fill="#e01e1e"/><circle cx="220.26" cy="177.51" r="1.7" fill="#e01e1e"/><circle cx="221.33" cy="167.51" r="1.7" fill="#e01e1e"/><circle cx="222.40" cy="158.81" r="1.7" fill="#e01e1e"/><circle cx="223.48" cy="151.41" r="1.7" fill="#e01e1e"/><circle cx="224.55" cy="145.29" r="1.7" fill="#e01e1e"/><circle cx="225.62" cy="140.46" r="1.7" fill="#e01e1e"/><circle cx="226.70" cy="136.93" r="1.7" fill="#e01e1e"/><circle cx="227.77" cy="134.69" r="1.7" fill="#e01e1e"/><circle cx="228.85" cy="133.74" r="1.7" fill="#e01e1e"/><circle cx="229.92" cy="134.08" r="1.7" fill="#e01e1e"/><circle cx="230.99" cy="135.71" r="1.7" fill="#e01e1e"/><circle cx="232.07" cy="138.63" r="1.7" fill="#e01e1e"/><circle cx="233.14" cy="142.85" r="1.7" fill="#e01e1e"/><circle cx="234.22" cy="148.36" r="1.7" fill="#e01e1e"/><circle cx="235.29" cy="155.15" r="1.7" fill="#e01e1e"/><circle cx="236.36" cy="163.24" r="1.7" fill="#e01e1e"/><circle cx="237.44" cy="172.63" r="1.7" fill="#e01e1e"/><circle cx="238.51" cy="183.30" r="1.7" fill="#e01e1e"/><circle cx="239.58" cy="195.26" r="1.7" fill="#e01e1e"/><circle cx="240.66" cy="208.52" r="1.7" fill="#e01e1e"/><circle cx="241.73" cy="223.07" r="1.7" fill="#e01e1e"/><circle cx="242.81" cy="238.91" r="1.7" fill="#e01e1e"/><circle cx="272.87" cy="246.62" r="1.7" fill="#e01e1e"/><circle cx="273.95" cy="232.82" r="1.7" fill="#e01e1e"/><circle cx="275.02" cy="220.39" r="1.7" fill="#e01e1e"/><circle cx="276.10" cy="209.31" r="1.7" fill="#e01e1e"/><circle cx="277.17" cy="199.59" r="1.7" fill="#e01e1e"/><circle cx="278.24" cy="191.24" r="1.7" fill="#e01e1e"/><circle cx="279.32" cy="184.25" r="1.7" fill="#e01e1e"/><circle cx="280.39" cy="178.61" r="1.7" fill="#e01e1e"/><circle cx="281.47" cy="174.34" r="1.7" fill="#e01e1e"/><circle cx="282.54" cy="171.43" r="1.7" fill="#e01e1e"/><circle cx="283.61" cy="169.88" r="1.7" fill="#e01e1e"/><circle cx="284.69" cy="169.69" r="1.7" fill="#e01e1e"/><circle cx="285.76" cy="170.86" r="1.7" fill="#e01e1e"/><circle cx="286.83" cy="173.39" r="1.7" fill="#e01e1e"/><circle cx="287.91" cy="177.28" r="1.7" fill="#e01e1e"/><circle cx="288.98" cy="182.54" r="1.7" fill="#e01e1e"/><circle cx="290.06" cy="189.15" r="1.7" fill="#e01e1e"/><circle cx="291.13" cy="197.12" r="1.7" fill="#e01e1e"/><circle cx="292.20" cy="206.46" r="1.7" fill="#e01e1e"/><circle cx="293.28" cy="217.15" r="1.7" fill="#e01e1e"/><circle cx="294.35" cy="229.21" r="1.7" fill="#e01e1e"/><circle cx="295.43" cy="242.63" r="1.7" fill="#e01e1e"/><circle cx="326.57" cy="249.02" r="1.7" fill="#e01e1e"/><circle cx="327.64" cy="234.46" r="1.7" fill="#e01e1e"/><circle cx="328.72" cy="221.25" r="1.7" fill="#e01e1e"/><circle cx="329.79" cy="209.41" r="1.7" fill="#e01e1e"/><circle cx="330.86" cy="198.92" r="1.7" fill="#e01e1e"/><circle cx="331.94" cy="189.80" r="1.7" fill="#e01e1e"/><circle cx="333.01" cy="182.03" r="1.7" fill="#e01e1e"/><circle cx="334.08" cy="175.63" r="1.7" fill="#e01e1e"/><circle cx="335.16" cy="170.59" r="1.7" fill="#e01e1e"/><circle cx="336.23" cy="166.91" r="1.7" fill="#e01e1e"/><circle cx="337.31" cy="164.59" r="1.7" fill="#e01e1e"/><circle cx="338.38" cy="163.63" r="1.7" fill="#e01e1e"/><circle cx="339.45" cy="164.03" r="1.7" fill="#e01e1e"/><circle cx="340.53" cy="165.79" r="1.7" fill="#e01e1e"/><circle cx="341.60" cy="168.91" r="1.7" fill="#e01e1e"/><circle cx="342.68" cy="173.40" r="1.7" fill="#e01e1e"/><circle cx="343.75" cy="179.24" r="1.7" fill="#e01e1e"/><circle cx="344.82" cy="186.45" r="1.7" fill="#e01e1e"/><circle cx="345.90" cy="195.01" r="1.7" fill="#e01e1e"/><circle cx="346.97" cy="204.94" r="1.7" fill="#e01e1e"/><circle cx="348.04" cy="216.23" r="1.7" fill="#e01e1e"/><circle cx="349.12" cy="228.87" r="1.7" fill="#e01e1e"/><circle cx="350.19" cy="242.88" r="1.7" fill="#e01e1e"/><circle cx="381.33" cy="247.35" r="1.7" fill="#e01e1e"/><circle cx="382.41" cy="232.50" r="1.7" fill="#e01e1e"/><circle cx="383.48" cy="219.02" r="1.7" fill="#e01e1e"/><circle cx="384.56" cy="206.93" r="1.7" fill="#e01e1e"/><circle cx="385.63" cy="196.23" r="1.7" fill="#e01e1e"/><circle cx="386.70" cy="186.91" r="1.7" fill="#e01e1e"/><circle cx="387.78" cy="178.97" r="1.7" fill="#e01e1e"/><circle cx="388.85" cy="172.42" r="1.7" fill="#e01e1e"/><circle cx="389.92" cy="167.25" r="1.7" fill="#e01e1e"/><circle cx="391.00" cy="163.46" r="1.7" fill="#e01e1e"/><circle cx="392.07" cy="161.06" r="1.7" fill="#e01e1e"/><circle cx="393.15" cy="160.04" r="1.7" fill="#e01e1e"/><circle cx="394.22" cy="160.40" r="1.7" fill="#e01e1e"/><circle cx="395.29" cy="162.15" r="1.7" fill="#e01e1e"/><circle cx="396.37" cy="165.29" r="1.7" fill="#e01e1e"/><circle cx="397.44" cy="169.80" r="1.7" fill="#e01e1e"/><circle cx="398.52" cy="175.70" r="1.7" fill="#e01e1e"/><circle cx="399.59" cy="182.99" r="1.7" fill="#e01e1e"/><circle cx="400.66" cy="191.65" r="1.7" fill="#e01e1e"/><circle cx="401.74" cy="201.71" r="1.7" fill="#e01e1e"/><circle cx="402.81" cy="213.14" r="1.7" fill="#e01e1e"/><circle cx="403.88" cy="225.96" r="1.7" fill="#e01e1e"/><circle cx="404.96" cy="240.16" r="1.7" fill="#e01e1e"/><circle cx="436.10" cy="243.53" r="1.7" fill="#e01e1e"/><circle cx="437.17" cy="229.02" r="1.7" fill="#e01e1e"/><circle cx="438.25" cy="215.89" r="1.7" fill="#e01e1e"/><circle cx="439.32" cy="204.15" r="1.7" fill="#e01e1e"/><circle cx="440.40" cy="193.79" r="1.7" fill="#e01e1e"/><circle cx="441.47" cy="184.81" r="1.7" fill="#e01e1e"/><circle cx="442.54" cy="177.21" r="1.7" fill="#e01e1e"/><circle cx="443.62" cy="171.00" r="1.7" fill="#e01e1e"/><circle cx="444.69" cy="166.18" r="1.7" fill="#e01e1e"/><circle cx="445.77" cy="162.73" r="1.7" fill="#e01e1e"/><circle cx="446.84" cy="160.68" r="1.7" fill="#e01e1e"/><circle cx="447.91" cy="160.00" r="1.7" fill="#e01e1e"/><circle cx="448.99" cy="160.71" r="1.7" fill="#e01e1e"/><circle cx="450.06" cy="162.80" r="1.7" fill="#e01e1e"/><circle cx="451.13" cy="166.28" r="1.7" fill="#e01e1e"/><circle cx="452.21" cy="171.14" r="1.7" fill="#e01e1e"/><circle cx="453.28" cy="177.38" r="1.7" fill="#e01e1e"/><circle cx="454.36" cy="185.01" r="1.7" fill="#e01e1e"/><circle cx="455.43" cy="194.02" r="1.7" fill="#e01e1e"/><circle cx="456.50" cy="204.42" r="1.7" fill="#e01e1e"/><circle cx="457.58" cy="216.20" r="1.7" fill="#e01e1e"/><circle cx="458.65" cy="229.36" r="1.7" fill="#e01e1e"/><circle cx="459.73" cy="243.91" r="1.7" fill="#e01e1e"/><circle cx="490.87" cy="239.52" r="1.7" fill="#e01e1e"/><circle cx="491.94" cy="225.48" r="1.7" fill="#e01e1e"/><circle cx="493.02" cy="212.83" r="1.7" fill="#e01e1e"/><circle cx="494.09" cy="201.55" r="1.7" fill="#e01e1e"/><circle cx="495.16" cy="191.66" r="1.7" fill="#e01e1e"/><circle cx="496.24" cy="183.16" r="1.7" fill="#e01e1e"/><circle cx="497.31" cy="176.04" r="1.7" fill="#e01e1e"/><circle cx="498.38" cy="170.30" r="1.7" fill="#e01e1e"/><circle cx="499.46" cy="165.95" r="1.7" fill="#e01e1e"/><circle cx="500.53" cy="162.98" r="1.7" fill="#e01e1e"/><circle cx="501.61" cy="161.39" r="1.7" fill="#e01e1e"/><circle cx="502.68" cy="161.19" r="1.7" fill="#e01e1e"/><circle cx="503.75" cy="162.37" r="1.7" fill="#e01e1e"/><circle cx="504.83" cy="164.93" r="1.7" fill="#e01e1e"/><circle cx="505.90" cy="168.88" r="1.7" fill="#e01e1e"/><circle cx="506.98" cy="174.21" r="1.7" fill="#e01e1e"/><circle cx="508.05" cy="180.93" r="1.7" fill="#e01e1e"/><circle cx="509.12" cy="189.03" r="1.7" fill="#e01e1e"/><circle cx="510.20" cy="198.52" r="1.7" fill="#e01e1e"/><circle cx="511.27" cy="209.38" r="1.7" fill="#e01e1e"/><circle cx="512.34" cy="221.63" r="1.7" fill="#e01e1e"/><circle cx="513.42" cy="235.27" r="1.7" fill="#e01e1e"/></svg>
<div class="t" style="right:627.60px;top:105.00px;font-size:6.55px;line-height:6.55px;color:#e8e8e8;font-family:'Liberation Sans', sans-serif;font-weight:normal;-webkit-text-stroke:0;">-17.90</div>
<div class="t" style="right:627.60px;top:124.00px;font-size:6.55px;line-height:6.55px;color:#e8e8e8;font-family:'Liberation Sans', sans-serif;font-weight:normal;-webkit-text-stroke:0;">-23.90</div>
<div class="t" style="right:627.60px;top:143.00px;font-size:6.55px;line-height:6.55px;color:#e8e8e8;font-family:'Liberation Sans', sans-serif;font-weight:normal;-webkit-text-stroke:0;">-29.90</div>
<div class="t" style="right:627.60px;top:162.00px;font-size:6.55px;line-height:6.55px;color:#e8e8e8;font-family:'Liberation Sans', sans-serif;font-weight:normal;-webkit-text-stroke:0;">-35.90</div>
<div class="t" style="right:627.60px;top:181.00px;font-size:6.55px;line-height:6.55px;color:#e8e8e8;font-family:'Liberation Sans', sans-serif;font-weight:normal;-webkit-text-stroke:0;">-41.90</div>
<div class="t" style="right:627.60px;top:200.00px;font-size:6.55px;line-height:6.55px;color:#e8e8e8;font-family:'Liberation Sans', sans-serif;font-weight:normal;-webkit-text-stroke:0;">-47.90</div>
<div class="t" style="right:627.60px;top:219.00px;font-size:6.55px;line-height:6.55px;color:#e8e8e8;font-family:'Liberation Sans', sans-serif;font-weight:normal;-webkit-text-stroke:0;">-53.90</div>
<div class="t" style="right:627.60px;top:238.00px;font-size:6.55px;line-height:6.55px;color:#e8e8e8;font-family:'Liberation Sans', sans-serif;font-weight:normal;-webkit-text-stroke:0;">-59.90</div>
<div class="t" style="right:627.60px;top:257.00px;font-size:6.55px;line-height:6.55px;color:#e8e8e8;font-family:'Liberation Sans', sans-serif;font-weight:normal;-webkit-text-stroke:0;">-65.90</div>
<div class="t" style="right:627.60px;top:276.00px;font-size:6.55px;line-height:6.55px;color:#e8e8e8;font-family:'Liberation Sans', sans-serif;font-weight:normal;-webkit-text-stroke:0;">-71.90</div>
<div class="t" style="right:627.60px;top:295.00px;font-size:6.55px;line-height:6.55px;color:#e8e8e8;font-family:'Liberation Sans', sans-serif;font-weight:normal;-webkit-text-stroke:0;">-77.90</div>
<div class="t" style="left:37.60px;top:99.00px;font-size:6.1px;line-height:6.1px;color:#e8e8e8;font-family:'Liberation Sans', sans-serif;font-weight:normal;-webkit-text-stroke:0;">Ref -17.90dBm</div>
<div class="t" style="left:161.30px;top:99.00px;font-size:6.1px;line-height:6.1px;color:#e8e8e8;font-family:'Liberation Sans', sans-serif;font-weight:normal;-webkit-text-stroke:0;">Att 34 dB</div>
<div class="t" style="left:284.00px;top:99.00px;font-size:6.1px;line-height:6.1px;color:#e8e8e8;font-family:'Liberation Sans', sans-serif;font-weight:normal;-webkit-text-stroke:0;">RBW 300.00 KHz</div>
<div class="t" style="left:407.40px;top:99.00px;font-size:6.1px;line-height:6.1px;color:#e8e8e8;font-family:'Liberation Sans', sans-serif;font-weight:normal;-webkit-text-stroke:0;">VBW 300.00 KHz</div>
<div class="t" style="left:40.00px;top:300.00px;font-size:6.1px;line-height:6.1px;color:#e8e8e8;font-family:'Liberation Sans', sans-serif;font-weight:normal;-webkit-text-stroke:0;">11.000 MHz</div>
<div class="t" style="right:132.30px;top:300.00px;font-size:6.1px;line-height:6.1px;color:#e8e8e8;font-family:'Liberation Sans', sans-serif;font-weight:normal;-webkit-text-stroke:0;">29.000 MHz</div>
<div class="r" style="left:531.00px;top:299.50px;width:0.80px;height:2.50px;background:#ccc;"></div>
<div class="r" style="left:36.90px;top:299.50px;width:0.80px;height:2.50px;background:#ccc;"></div>
<div class="t" style="left:48.00px;top:315.00px;font-size:6.1px;line-height:6.1px;color:#e8e8e8;font-family:'Liberation Sans', sans-serif;font-weight:normal;-webkit-text-stroke:0;">Start Frequency  11.000 MHz</div>
<div class="t" style="left:48.00px;top:327.00px;font-size:6.1px;line-height:6.1px;color:#e8e8e8;font-family:'Liberation Sans', sans-serif;font-weight:normal;-webkit-text-stroke:0;">Span  18.000 MHz</div>
<div class="t" style="left:241.90px;top:315.00px;font-size:6.1px;line-height:6.1px;color:#e8e8e8;font-family:'Liberation Sans', sans-serif;font-weight:normal;-webkit-text-stroke:0;">Center Frequency  20.000 MHz</div>
<div class="t" style="left:241.90px;top:327.00px;font-size:6.1px;line-height:6.1px;color:#e8e8e8;font-family:'Liberation Sans', sans-serif;font-weight:normal;-webkit-text-stroke:0;">Sweep Time  101.717470 ms</div>
<div class="t" style="right:139.00px;top:315.00px;font-size:6.1px;line-height:6.1px;color:#e8e8e8;font-family:'Liberation Sans', sans-serif;font-weight:normal;-webkit-text-stroke:0;">Stop Frequency  29.000 MHz</div>
<div class="r" style="left:537.00px;top:92.00px;width:109.40px;height:191.00px;background:linear-gradient(#d2e6f8,#c2dbf4 60%,#b4d4f2);"></div>
<div class="r" style="left:636.00px;top:92.00px;width:10.20px;height:191.00px;background:linear-gradient(#c4def6,#acd0f1);"></div>
<div class="r" style="left:635.50px;top:92.00px;width:0.80px;height:191.50px;background:#dcecfa;"></div>
<div class="r" style="left:537.00px;top:282.70px;width:99.30px;height:0.80px;background:#cfe4f8;"></div>
<div class="r" style="left:537.00px;top:283.00px;width:109.40px;height:189.50px;background:linear-gradient(#aad0f1,#92c2ec 50%,#7fb4e4);"></div>
<div class="t" style="left:544.00px;top:95.00px;font-size:5.4px;line-height:5.4px;color:#1a1a1a;font-family:'Liberation Sans', sans-serif;font-weight:normal;">FREQ &amp; SPAN</div>
<div class="t" style="left:542.30px;top:108.00px;font-size:5.7px;line-height:5.7px;color:#1a1a1a;font-family:'Liberation Sans', sans-serif;font-weight:normal;">Start Freq</div>
<div class="r" style="left:577.60px;top:105.30px;width:55.90px;height:9.90px;background:#fff;border:1px solid #a8b4c0;"></div>
<div class="t" style="right:32.50px;top:108.00px;font-size:5.6px;line-height:5.6px;color:#111;font-family:'Liberation Sans', sans-serif;font-weight:normal;">0.011,000,000 Hz</div>
<div class="t" style="left:542.30px;top:126.00px;font-size:5.7px;line-height:5.7px;color:#1a1a1a;font-family:'Liberation Sans', sans-serif;font-weight:normal;">Center Freq</div>
<div class="r" style="left:577.60px;top:123.40px;width:55.90px;height:10.90px;background:#fff;border:1px solid #a8b4c0;"></div>
<div class="t" style="right:32.50px;top:127.00px;font-size:5.6px;line-height:5.6px;color:#111;font-family:'Liberation Sans', sans-serif;font-weight:normal;">0,020,000,000 Hz</div>
<div class="t" style="left:542.30px;top:146.00px;font-size:5.7px;line-height:5.7px;color:#1a1a1a;font-family:'Liberation Sans', sans-serif;font-weight:normal;">Stop Freq</div>
<div class="r" style="left:577.60px;top:142.60px;width:55.90px;height:10.90px;background:#fff;border:1px solid #3a3a3a;"></div>
<div class="t" style="right:32.50px;top:146.00px;font-size:5.6px;line-height:5.6px;color:#111;font-family:'Liberation Sans', sans-serif;font-weight:normal;">0,029,000,000 Hz</div>
<div class="t" style="left:542.30px;top:164.00px;font-size:5.7px;line-height:5.7px;color:#1a1a1a;font-family:'Liberation Sans', sans-serif;font-weight:normal;">Span Freq</div>
<div class="r" style="left:577.60px;top:161.30px;width:55.90px;height:10.60px;background:#fff;border:1px solid #a8b4c0;"></div>
<div class="t" style="right:32.50px;top:165.00px;font-size:5.6px;line-height:5.6px;color:#111;font-family:'Liberation Sans', sans-serif;font-weight:normal;">0,018,000,000 Hz</div>
<div class="t" style="left:544.00px;top:186.00px;font-size:5.4px;line-height:5.4px;color:#1a1a1a;font-family:'Liberation Sans', sans-serif;font-weight:normal;">AMPT &amp; BW</div>
<div class="t" style="left:542.30px;top:202.00px;font-size:5.6px;line-height:5.6px;color:#1a1a1a;font-family:'Liberation Sans', sans-serif;font-weight:normal;">Ref Level</div>
<div class="r" style="left:577.60px;top:198.00px;width:35.10px;height:10.00px;background:#fff;border:1px solid #b8c4d0;"></div>
<div class="t" style="left:395.20px;width:400px;text-align:center;top:201.00px;font-size:5.4px;line-height:5.4px;color:#111;font-family:'Liberation Sans', sans-serif;font-weight:normal;">-17.90</div>
<div class="t" style="left:618.00px;top:202.00px;font-size:5.6px;line-height:5.6px;color:#1a1a1a;font-family:'Liberation Sans', sans-serif;font-weight:normal;">dBm</div>
<div class="t" style="left:542.30px;top:218.00px;font-size:5.6px;line-height:5.6px;color:#1a1a1a;font-family:'Liberation Sans', sans-serif;font-weight:normal;">Scale / DIV</div>
<div class="r" style="left:577.60px;top:215.40px;width:35.10px;height:10.40px;background:#fff;border:1px solid #b8c4d0;"></div>
<div class="t" style="left:395.20px;width:400px;text-align:center;top:219.00px;font-size:5.4px;line-height:5.4px;color:#111;font-family:'Liberation Sans', sans-serif;font-weight:normal;">6.00</div>
<div class="t" style="left:617.00px;top:218.00px;font-size:5.6px;line-height:5.6px;color:#1a1a1a;font-family:'Liberation Sans', sans-serif;font-weight:normal;">/ DIV</div>
<div class="r" style="left:541.30px;top:234.40px;width:7.30px;height:7.30px;background:#fff;border:1px solid #555;"></div>
<div class="t" style="left:551.80px;top:236.00px;font-size:5.6px;line-height:5.6px;color:#1a1a1a;font-family:'Liberation Sans', sans-serif;font-weight:normal;">AUTO</div>
<div class="r" style="left:541.30px;top:251.30px;width:7.30px;height:7.30px;background:#fff;border:1px solid #555;"></div>
<div class="t" style="left:551.80px;top:253.00px;font-size:5.6px;line-height:5.6px;color:#1a1a1a;font-family:'Liberation Sans', sans-serif;font-weight:normal;">AUTO</div>
<div class="r" style="left:541.30px;top:269.00px;width:7.30px;height:7.30px;background:#fff;border:1px solid #555;"></div>
<svg style="left:541.3px;top:269px" width="7.3" height="7.3" viewBox="0 0 7.3 7.3"><path d="M1.3 3.6L2.9 5.5L6.2 1.4" stroke="#222" stroke-width="0.8" fill="none"/></svg>
<div class="t" style="left:551.80px;top:271.00px;font-size:5.6px;line-height:5.6px;color:#1a1a1a;font-family:'Liberation Sans', sans-serif;font-weight:normal;">AUTO</div>
<div class="t" style="left:576.30px;top:236.00px;font-size:5.6px;line-height:5.6px;color:#1a1a1a;font-family:'Liberation Sans', sans-serif;font-weight:normal;">ATT</div>
<div class="r" style="left:591.70px;top:232.00px;width:28.30px;height:10.20px;background:#fff;border:1px solid #c0c8d0;"></div>
<div class="r" style="left:612.50px;top:232.50px;width:7.00px;height:9.20px;background:#f0f0f0;border-left:1px solid #d0d0d0;"></div>
<div class="t" style="left:600.00px;top:235.00px;font-size:5.4px;line-height:5.4px;color:#111;font-family:'Liberation Sans', sans-serif;font-weight:normal;">34</div>
<div class="t" style="left:416.00px;width:400px;text-align:center;top:234.00px;font-size:4px;line-height:4px;color:#333;font-family:'Liberation Sans', sans-serif;font-weight:normal;">▴</div>
<div class="t" style="left:416.00px;width:400px;text-align:center;top:238.00px;font-size:4px;line-height:4px;color:#333;font-family:'Liberation Sans', sans-serif;font-weight:normal;">▾</div>
<div class="t" style="left:624.00px;top:236.00px;font-size:5.6px;line-height:5.6px;color:#1a1a1a;font-family:'Liberation Sans', sans-serif;font-weight:normal;">dB</div>
<div class="t" style="left:578.00px;top:253.00px;font-size:5.6px;line-height:5.6px;color:#1a1a1a;font-family:'Liberation Sans', sans-serif;font-weight:normal;">RBW</div>
<div class="t" style="left:578.00px;top:271.00px;font-size:5.6px;line-height:5.6px;color:#1a1a1a;font-family:'Liberation Sans', sans-serif;font-weight:normal;">VBW</div>
<div class="r" style="left:600.40px;top:250.00px;width:30.90px;height:10.40px;background:#e6e6e6;border:1px solid #c8c8c8;"></div>
<div class="t" style="left:602.70px;top:253.00px;font-size:5.4px;line-height:5.4px;color:#111;font-family:'Liberation Sans', sans-serif;font-weight:normal;">300kHz</div>
<svg style="left:625px;top:253.70px" width="5" height="3" viewBox="0 0 5 3"><path d="M0.5 0.5L2.5 2.5L4.5 0.5" stroke="#444" stroke-width="0.7" fill="none"/></svg>
<div class="r" style="left:600.40px;top:267.00px;width:30.90px;height:11.00px;background:#e6e6e6;border:1px solid #c8c8c8;"></div>
<div class="t" style="left:602.70px;top:271.00px;font-size:5.4px;line-height:5.4px;color:#111;font-family:'Liberation Sans', sans-serif;font-weight:normal;">300kHz</div>
<svg style="left:625px;top:271.00px" width="5" height="3" viewBox="0 0 5 3"><path d="M0.5 0.5L2.5 2.5L4.5 0.5" stroke="#444" stroke-width="0.7" fill="none"/></svg>
<div class="r" style="left:9.40px;top:336.00px;width:263.80px;height:16.00px;background:linear-gradient(#c8e0f0 0%,#9cb8cc 8%,#9cb8cc 17%,#d0e8f8 20%,#c6e3f8 46%,#aad2f4 58%,#8cc0e6 84%,#78b2dc 90%,#88c0e4 100%);"></div>
<div class="r" style="left:9.40px;top:352.00px;width:263.80px;height:120.50px;background:#fff;"></div>
<div class="r" style="left:275.40px;top:336.00px;width:261.40px;height:16.00px;background:linear-gradient(#c8e0f0 0%,#9cb8cc 8%,#9cb8cc 17%,#d0e8f8 20%,#c6e3f8 46%,#aad2f4 58%,#8cc0e6 84%,#78b2dc 90%,#88c0e4 100%);"></div>
<div class="r" style="left:275.40px;top:352.00px;width:261.40px;height:120.50px;background:#fff;"></div>
<div class="r" style="left:273.20px;top:336.20px;width:2.20px;height:136.30px;background:#8fbde6;"></div>
<svg style="left:14.0px;top:343px" width="5" height="5" viewBox="0 0 5 5"><path d="M0.3 2.5H3.5M2.2 1L4 2.5L2.2 4" stroke="#a8bcd4" stroke-width="1" fill="none"/></svg>
<div class="r" style="left:25.80px;top:343.30px;width:5.60px;height:4.60px;background:linear-gradient(135deg,#9ab4e8,#3a5aa8);"></div>
<div class="r" style="left:36.70px;top:343.00px;width:5.60px;height:5.20px;background:#f4f8fc;border-right:1.2px solid #3a5a98;border-bottom:1px solid #6080b8;border-left:0.6px solid #90a8cc;"></div>
<svg style="left:279.5px;top:343px" width="5" height="5" viewBox="0 0 5 5"><path d="M0.3 2.5H3.5M2.2 1L4 2.5L2.2 4" stroke="#a8bcd4" stroke-width="1" fill="none"/></svg>
<div class="r" style="left:291.20px;top:343.30px;width:5.60px;height:4.60px;background:linear-gradient(135deg,#9ab4e8,#3a5aa8);"></div>
<div class="r" style="left:302.80px;top:343.00px;width:5.60px;height:5.20px;background:#f4f8fc;border-right:1.2px solid #3a5a98;border-bottom:1px solid #6080b8;border-left:0.6px solid #90a8cc;"></div>
<div class="t" style="left:52.80px;top:344.00px;font-size:5.6px;line-height:5.6px;color:#1a2a50;font-family:'Liberation Sans', sans-serif;font-weight:normal;">Peak Excursion(dB):</div>
<div class="r" style="left:111.00px;top:341.00px;width:35.00px;height:9.50px;background:#fff;"></div>
<div class="t" style="left:113.30px;top:344.00px;font-size:5.6px;line-height:5.6px;color:#111;font-family:'Liberation Sans', sans-serif;font-weight:normal;">0</div>
<div class="t" style="left:-57.60px;width:400px;text-align:center;top:345.00px;font-size:4.5px;line-height:4.5px;color:#1a3a80;font-family:'Liberation Sans', sans-serif;font-weight:normal;">▾</div>
<div style="position:absolute;left:0;top:352px;width:661px;height:111.6px;overflow:hidden;"><div style="position:absolute;left:0;top:-352px;width:661px;height:491px;">
<div class="t" style="left:13.30px;top:356.00px;font-size:6.4px;line-height:6.4px;color:#222;font-family:'Liberation Mono', monospace;font-weight:normal;transform:scaleX(0.83);transform-origin:0 0;-webkit-text-stroke:0;">Peak Number</div>
<div class="t" style="left:66.00px;top:356.00px;font-size:6.4px;line-height:6.4px;color:#222;font-family:'Liberation Mono', monospace;font-weight:normal;transform:scaleX(0.83);transform-origin:0 0;-webkit-text-stroke:0;">X Value</div>
<div class="t" style="left:119.80px;top:356.00px;font-size:6.4px;line-height:6.4px;color:#222;font-family:'Liberation Mono', monospace;font-weight:normal;transform:scaleX(0.83);transform-origin:0 0;-webkit-text-stroke:0;">Y Value</div>
<div class="t" style="left:13.30px;top:367.00px;font-size:6.4px;line-height:6.4px;color:#000;font-family:'Liberation Mono', monospace;font-weight:normal;transform:scaleX(0.83);transform-origin:0 0;-webkit-text-stroke:0.12px #000;">Peak 0</div>
<div class="t" style="left:66.00px;top:367.00px;font-size:6.4px;line-height:6.4px;color:#222;font-family:'Liberation Mono', monospace;font-weight:normal;transform:scaleX(0.83);transform-origin:0 0;-webkit-text-stroke:0;">12017391</div>
<div class="t" style="left:119.80px;top:367.00px;font-size:6.4px;line-height:6.4px;color:#222;font-family:'Liberation Mono', monospace;font-weight:normal;transform:scaleX(0.83);transform-origin:0 0;-webkit-text-stroke:0;">-23.1139</div>
<div class="t" style="left:13.30px;top:376.00px;font-size:6.4px;line-height:6.4px;color:#000;font-family:'Liberation Mono', monospace;font-weight:normal;transform:scaleX(0.83);transform-origin:0 0;-webkit-text-stroke:0.12px #000;">Peak 1</div>
<div class="t" style="left:66.00px;top:376.00px;font-size:6.4px;line-height:6.4px;color:#222;font-family:'Liberation Mono', monospace;font-weight:normal;transform:scaleX(0.83);transform-origin:0 0;-webkit-text-stroke:0;">11976260</div>
<div class="t" style="left:119.80px;top:376.00px;font-size:6.4px;line-height:6.4px;color:#222;font-family:'Liberation Mono', monospace;font-weight:normal;transform:scaleX(0.83);transform-origin:0 0;-webkit-text-stroke:0;">-23.161</div>
<div class="t" style="left:13.30px;top:384.00px;font-size:6.4px;line-height:6.4px;color:#000;font-family:'Liberation Mono', monospace;font-weight:normal;transform:scaleX(0.83);transform-origin:0 0;-webkit-text-stroke:0.12px #000;">Peak 2</div>
<div class="t" style="left:66.00px;top:384.00px;font-size:6.4px;line-height:6.4px;color:#222;font-family:'Liberation Mono', monospace;font-weight:normal;transform:scaleX(0.83);transform-origin:0 0;-webkit-text-stroke:0;">11932130</div>
<div class="t" style="left:119.80px;top:384.00px;font-size:6.4px;line-height:6.4px;color:#222;font-family:'Liberation Mono', monospace;font-weight:normal;transform:scaleX(0.83);transform-origin:0 0;-webkit-text-stroke:0;">-23.5654</div>
<div class="t" style="left:13.30px;top:393.00px;font-size:6.4px;line-height:6.4px;color:#000;font-family:'Liberation Mono', monospace;font-weight:normal;transform:scaleX(0.83);transform-origin:0 0;-webkit-text-stroke:0.12px #000;">Peak 3</div>
<div class="t" style="left:66.00px;top:393.00px;font-size:6.4px;line-height:6.4px;color:#222;font-family:'Liberation Mono', monospace;font-weight:normal;transform:scaleX(0.83);transform-origin:0 0;-webkit-text-stroke:0;">12056521</div>
<div class="t" style="left:119.80px;top:393.00px;font-size:6.4px;line-height:6.4px;color:#222;font-family:'Liberation Mono', monospace;font-weight:normal;transform:scaleX(0.83);transform-origin:0 0;-webkit-text-stroke:0;">-23.561</div>
<div class="t" style="left:13.30px;top:402.00px;font-size:6.4px;line-height:6.4px;color:#000;font-family:'Liberation Mono', monospace;font-weight:normal;transform:scaleX(0.83);transform-origin:0 0;-webkit-text-stroke:0.12px #000;">Peak 4</div>
<div class="t" style="left:66.00px;top:402.00px;font-size:6.4px;line-height:6.4px;color:#222;font-family:'Liberation Mono', monospace;font-weight:normal;transform:scaleX(0.83);transform-origin:0 0;-webkit-text-stroke:0;">12080582</div>
<div class="t" style="left:119.80px;top:402.00px;font-size:6.4px;line-height:6.4px;color:#222;font-family:'Liberation Mono', monospace;font-weight:normal;transform:scaleX(0.83);transform-origin:0 0;-webkit-text-stroke:0;">-24.3615</div>
<div class="t" style="left:13.30px;top:410.00px;font-size:6.4px;line-height:6.4px;color:#000;font-family:'Liberation Mono', monospace;font-weight:normal;transform:scaleX(0.83);transform-origin:0 0;-webkit-text-stroke:0.12px #000;">Peak 5</div>
<div class="t" style="left:66.00px;top:410.00px;font-size:6.4px;line-height:6.4px;color:#222;font-family:'Liberation Mono', monospace;font-weight:normal;transform:scaleX(0.83);transform-origin:0 0;-webkit-text-stroke:0;">11900300</div>
<div class="t" style="left:119.80px;top:410.00px;font-size:6.4px;line-height:6.4px;color:#222;font-family:'Liberation Mono', monospace;font-weight:normal;transform:scaleX(0.83);transform-origin:0 0;-webkit-text-stroke:0;">-24.3698</div>
<div class="t" style="left:13.30px;top:419.00px;font-size:6.4px;line-height:6.4px;color:#000;font-family:'Liberation Mono', monospace;font-weight:normal;transform:scaleX(0.83);transform-origin:0 0;-webkit-text-stroke:0.12px #000;">Peak 6</div>
<div class="t" style="left:66.00px;top:419.00px;font-size:6.4px;line-height:6.4px;color:#222;font-family:'Liberation Mono', monospace;font-weight:normal;transform:scaleX(0.83);transform-origin:0 0;-webkit-text-stroke:0;">11860369</div>
<div class="t" style="left:119.80px;top:419.00px;font-size:6.4px;line-height:6.4px;color:#222;font-family:'Liberation Mono', monospace;font-weight:normal;transform:scaleX(0.83);transform-origin:0 0;-webkit-text-stroke:0;">-25.6475</div>
<div class="t" style="left:13.30px;top:427.00px;font-size:6.4px;line-height:6.4px;color:#000;font-family:'Liberation Mono', monospace;font-weight:normal;transform:scaleX(0.83);transform-origin:0 0;-webkit-text-stroke:0.12px #000;">Peak 7</div>
<div class="t" style="left:66.00px;top:427.00px;font-size:6.4px;line-height:6.4px;color:#222;font-family:'Liberation Mono', monospace;font-weight:normal;transform:scaleX(0.83);transform-origin:0 0;-webkit-text-stroke:0;">12134782</div>
<div class="t" style="left:119.80px;top:427.00px;font-size:6.4px;line-height:6.4px;color:#222;font-family:'Liberation Mono', monospace;font-weight:normal;transform:scaleX(0.83);transform-origin:0 0;-webkit-text-stroke:0;">-25.6806</div>
<div class="t" style="left:13.30px;top:436.00px;font-size:6.4px;line-height:6.4px;color:#000;font-family:'Liberation Mono', monospace;font-weight:normal;transform:scaleX(0.83);transform-origin:0 0;-webkit-text-stroke:0.12px #000;">Peak 8</div>
<div class="t" style="left:66.00px;top:436.00px;font-size:6.4px;line-height:6.4px;color:#222;font-family:'Liberation Mono', monospace;font-weight:normal;transform:scaleX(0.83);transform-origin:0 0;-webkit-text-stroke:0;">18004347</div>
<div class="t" style="left:119.80px;top:436.00px;font-size:6.4px;line-height:6.4px;color:#222;font-family:'Liberation Mono', monospace;font-weight:normal;transform:scaleX(0.83);transform-origin:0 0;-webkit-text-stroke:0;">-28.9192</div>
<div class="t" style="left:13.30px;top:444.00px;font-size:6.4px;line-height:6.4px;color:#000;font-family:'Liberation Mono', monospace;font-weight:normal;transform:scaleX(0.83);transform-origin:0 0;-webkit-text-stroke:0.12px #000;">Peak 9</div>
<div class="t" style="left:66.00px;top:444.00px;font-size:6.4px;line-height:6.4px;color:#222;font-family:'Liberation Mono', monospace;font-weight:normal;transform:scaleX(0.83);transform-origin:0 0;-webkit-text-stroke:0;">17960217</div>
<div class="t" style="left:119.80px;top:444.00px;font-size:6.4px;line-height:6.4px;color:#222;font-family:'Liberation Mono', monospace;font-weight:normal;transform:scaleX(0.83);transform-origin:0 0;-webkit-text-stroke:0;">-26.4712</div>
<div class="t" style="left:13.30px;top:453.00px;font-size:6.4px;line-height:6.4px;color:#000;font-family:'Liberation Mono', monospace;font-weight:normal;transform:scaleX(0.83);transform-origin:0 0;-webkit-text-stroke:0.12px #000;">Peak 10</div>
<div class="t" style="left:66.00px;top:453.00px;font-size:6.4px;line-height:6.4px;color:#222;font-family:'Liberation Mono', monospace;font-weight:normal;transform:scaleX(0.83);transform-origin:0 0;-webkit-text-stroke:0;">18042478</div>
<div class="t" style="left:119.80px;top:453.00px;font-size:6.4px;line-height:6.4px;color:#222;font-family:'Liberation Mono', monospace;font-weight:normal;transform:scaleX(0.83);transform-origin:0 0;-webkit-text-stroke:0;">-28.5778</div>
<div class="t" style="left:13.30px;top:461.00px;font-size:6.4px;line-height:6.4px;color:#000;font-family:'Liberation Mono', monospace;font-weight:normal;transform:scaleX(0.83);transform-origin:0 0;-webkit-text-stroke:0.12px #000;">Peak 11</div>
<div class="t" style="left:66.00px;top:461.00px;font-size:6.4px;line-height:6.4px;color:#222;font-family:'Liberation Mono', monospace;font-weight:normal;transform:scaleX(0.83);transform-origin:0 0;-webkit-text-stroke:0;">17921739</div>
<div class="t" style="left:119.80px;top:461.00px;font-size:6.4px;line-height:6.4px;color:#222;font-family:'Liberation Mono', monospace;font-weight:normal;transform:scaleX(0.83);transform-origin:0 0;-webkit-text-stroke:0;">-29.0621</div>
<div class="r" style="left:10.30px;top:381.30px;width:253.70px;height:0.70px;background:#e2e2e2;"></div>
<div class="r" style="left:10.30px;top:398.65px;width:253.70px;height:0.70px;background:#e2e2e2;"></div>
<div class="r" style="left:10.30px;top:416.00px;width:253.70px;height:0.70px;background:#e2e2e2;"></div>
<div class="r" style="left:10.30px;top:433.35px;width:253.70px;height:0.70px;background:#e2e2e2;"></div>
<div class="r" style="left:10.30px;top:450.70px;width:253.70px;height:0.70px;background:#e2e2e2;"></div>
<div class="r" style="left:62.50px;top:352.00px;width:0.60px;height:111.60px;background:#f6f6f6;"></div>
<div class="r" style="left:116.80px;top:352.00px;width:0.60px;height:111.60px;background:#e8e8e8;"></div>
<div class="t" style="left:278.30px;top:356.00px;font-size:6.4px;line-height:6.4px;color:#222;font-family:'Liberation Mono', monospace;font-weight:normal;transform:scaleX(0.83);transform-origin:0 0;-webkit-text-stroke:0;">Valley Number</div>
<div class="t" style="left:332.00px;top:356.00px;font-size:6.4px;line-height:6.4px;color:#222;font-family:'Liberation Mono', monospace;font-weight:normal;transform:scaleX(0.83);transform-origin:0 0;-webkit-text-stroke:0;">X Value</div>
<div class="t" style="left:386.40px;top:356.00px;font-size:6.4px;line-height:6.4px;color:#222;font-family:'Liberation Mono', monospace;font-weight:normal;transform:scaleX(0.83);transform-origin:0 0;-webkit-text-stroke:0;">Y Value</div>
<div class="t" style="left:278.30px;top:367.00px;font-size:6.4px;line-height:6.4px;color:#000;font-family:'Liberation Mono', monospace;font-weight:normal;transform:scaleX(0.83);transform-origin:0 0;-webkit-text-stroke:0.12px #000;">Valley 0</div>
<div class="t" style="left:332.00px;top:367.00px;font-size:6.4px;line-height:6.4px;color:#222;font-family:'Liberation Mono', monospace;font-weight:normal;transform:scaleX(0.83);transform-origin:0 0;-webkit-text-stroke:0;">25321739</div>
<div class="t" style="left:386.40px;top:367.00px;font-size:6.4px;line-height:6.4px;color:#222;font-family:'Liberation Mono', monospace;font-weight:normal;transform:scaleX(0.83);transform-origin:0 0;-webkit-text-stroke:0;">-72.6851</div>
<div class="t" style="left:278.30px;top:376.00px;font-size:6.4px;line-height:6.4px;color:#000;font-family:'Liberation Mono', monospace;font-weight:normal;transform:scaleX(0.83);transform-origin:0 0;-webkit-text-stroke:0.12px #000;">Valley 1</div>
<div class="t" style="left:332.00px;top:376.00px;font-size:6.4px;line-height:6.4px;color:#222;font-family:'Liberation Mono', monospace;font-weight:normal;transform:scaleX(0.83);transform-origin:0 0;-webkit-text-stroke:0;">20547826</div>
<div class="t" style="left:386.40px;top:376.00px;font-size:6.4px;line-height:6.4px;color:#222;font-family:'Liberation Mono', monospace;font-weight:normal;transform:scaleX(0.83);transform-origin:0 0;-webkit-text-stroke:0;">-72.3834</div>
<div class="t" style="left:278.30px;top:384.00px;font-size:6.4px;line-height:6.4px;color:#000;font-family:'Liberation Mono', monospace;font-weight:normal;transform:scaleX(0.83);transform-origin:0 0;-webkit-text-stroke:0.12px #000;">Valley 2</div>
<div class="t" style="left:332.00px;top:384.00px;font-size:6.4px;line-height:6.4px;color:#222;font-family:'Liberation Mono', monospace;font-weight:normal;transform:scaleX(0.83);transform-origin:0 0;-webkit-text-stroke:0;">10869565</div>
<div class="t" style="left:386.40px;top:384.00px;font-size:6.4px;line-height:6.4px;color:#222;font-family:'Liberation Mono', monospace;font-weight:normal;transform:scaleX(0.83);transform-origin:0 0;-webkit-text-stroke:0;">-72.2239</div>
<div class="t" style="left:278.30px;top:393.00px;font-size:6.4px;line-height:6.4px;color:#000;font-family:'Liberation Mono', monospace;font-weight:normal;transform:scaleX(0.83);transform-origin:0 0;-webkit-text-stroke:0.12px #000;">Valley 3</div>
<div class="t" style="left:332.00px;top:393.00px;font-size:6.4px;line-height:6.4px;color:#222;font-family:'Liberation Mono', monospace;font-weight:normal;transform:scaleX(0.83);transform-origin:0 0;-webkit-text-stroke:0;">15100000</div>
<div class="t" style="left:386.40px;top:393.00px;font-size:6.4px;line-height:6.4px;color:#222;font-family:'Liberation Mono', monospace;font-weight:normal;transform:scaleX(0.83);transform-origin:0 0;-webkit-text-stroke:0;">-72.022</div>
<div class="t" style="left:278.30px;top:402.00px;font-size:6.4px;line-height:6.4px;color:#000;font-family:'Liberation Mono', monospace;font-weight:normal;transform:scaleX(0.83);transform-origin:0 0;-webkit-text-stroke:0.12px #000;">Valley 4</div>
<div class="t" style="left:332.00px;top:402.00px;font-size:6.4px;line-height:6.4px;color:#222;font-family:'Liberation Mono', monospace;font-weight:normal;transform:scaleX(0.83);transform-origin:0 0;-webkit-text-stroke:0;">17280806</div>
<div class="t" style="left:386.40px;top:402.00px;font-size:6.4px;line-height:6.4px;color:#222;font-family:'Liberation Mono', monospace;font-weight:normal;transform:scaleX(0.83);transform-origin:0 0;-webkit-text-stroke:0;">-71.0082</div>
<div class="t" style="left:278.30px;top:410.00px;font-size:6.4px;line-height:6.4px;color:#000;font-family:'Liberation Mono', monospace;font-weight:normal;transform:scaleX(0.83);transform-origin:0 0;-webkit-text-stroke:0.12px #000;">Valley 5</div>
<div class="t" style="left:332.00px;top:410.00px;font-size:6.4px;line-height:6.4px;color:#222;font-family:'Liberation Mono', monospace;font-weight:normal;transform:scaleX(0.83);transform-origin:0 0;-webkit-text-stroke:0;">24891304</div>
<div class="t" style="left:386.40px;top:410.00px;font-size:6.4px;line-height:6.4px;color:#222;font-family:'Liberation Mono', monospace;font-weight:normal;transform:scaleX(0.83);transform-origin:0 0;-webkit-text-stroke:0;">-71.4246</div>
<div class="t" style="left:278.30px;top:419.00px;font-size:6.4px;line-height:6.4px;color:#000;font-family:'Liberation Mono', monospace;font-weight:normal;transform:scaleX(0.83);transform-origin:0 0;-webkit-text-stroke:0.12px #000;">Valley 6</div>
<div class="t" style="left:332.00px;top:419.00px;font-size:6.4px;line-height:6.4px;color:#222;font-family:'Liberation Mono', monospace;font-weight:normal;transform:scaleX(0.83);transform-origin:0 0;-webkit-text-stroke:0;">15108695</div>
<div class="t" style="left:386.40px;top:419.00px;font-size:6.4px;line-height:6.4px;color:#222;font-family:'Liberation Mono', monospace;font-weight:normal;transform:scaleX(0.83);transform-origin:0 0;-webkit-text-stroke:0;">-71.1224</div>
<div class="t" style="left:278.30px;top:427.00px;font-size:6.4px;line-height:6.4px;color:#000;font-family:'Liberation Mono', monospace;font-weight:normal;transform:scaleX(0.83);transform-origin:0 0;-webkit-text-stroke:0.12px #000;">Valley 7</div>
<div class="t" style="left:332.00px;top:427.00px;font-size:6.4px;line-height:6.4px;color:#222;font-family:'Liberation Mono', monospace;font-weight:normal;transform:scaleX(0.83);transform-origin:0 0;-webkit-text-stroke:0;">27043478</div>
<div class="t" style="left:386.40px;top:427.00px;font-size:6.4px;line-height:6.4px;color:#222;font-family:'Liberation Mono', monospace;font-weight:normal;transform:scaleX(0.83);transform-origin:0 0;-webkit-text-stroke:0;">-71.0063</div>
<div class="t" style="left:278.30px;top:436.00px;font-size:6.4px;line-height:6.4px;color:#000;font-family:'Liberation Mono', monospace;font-weight:normal;transform:scaleX(0.83);transform-origin:0 0;-webkit-text-stroke:0.12px #000;">Valley 8</div>
<div class="t" style="left:332.00px;top:436.00px;font-size:6.4px;line-height:6.4px;color:#222;font-family:'Liberation Mono', monospace;font-weight:normal;transform:scaleX(0.83);transform-origin:0 0;-webkit-text-stroke:0;">26534782</div>
<div class="t" style="left:386.40px;top:436.00px;font-size:6.4px;line-height:6.4px;color:#222;font-family:'Liberation Mono', monospace;font-weight:normal;transform:scaleX(0.83);transform-origin:0 0;-webkit-text-stroke:0;">-71.0905</div>
<div class="t" style="left:278.30px;top:444.00px;font-size:6.4px;line-height:6.4px;color:#000;font-family:'Liberation Mono', monospace;font-weight:normal;transform:scaleX(0.83);transform-origin:0 0;-webkit-text-stroke:0.12px #000;">Valley 9</div>
<div class="t" style="left:332.00px;top:444.00px;font-size:6.4px;line-height:6.4px;color:#222;font-family:'Liberation Mono', monospace;font-weight:normal;transform:scaleX(0.83);transform-origin:0 0;-webkit-text-stroke:0;">27160575</div>
<div class="t" style="left:386.40px;top:444.00px;font-size:6.4px;line-height:6.4px;color:#222;font-family:'Liberation Mono', monospace;font-weight:normal;transform:scaleX(0.83);transform-origin:0 0;-webkit-text-stroke:0;">-71.0027</div>
<div class="t" style="left:278.30px;top:453.00px;font-size:6.4px;line-height:6.4px;color:#000;font-family:'Liberation Mono', monospace;font-weight:normal;transform:scaleX(0.83);transform-origin:0 0;-webkit-text-stroke:0.12px #000;">Valley 10</div>
<div class="t" style="left:332.00px;top:453.00px;font-size:6.4px;line-height:6.4px;color:#222;font-family:'Liberation Mono', monospace;font-weight:normal;transform:scaleX(0.83);transform-origin:0 0;-webkit-text-stroke:0;">24817391</div>
<div class="t" style="left:386.40px;top:453.00px;font-size:6.4px;line-height:6.4px;color:#222;font-family:'Liberation Mono', monospace;font-weight:normal;transform:scaleX(0.83);transform-origin:0 0;-webkit-text-stroke:0;">-70.8695</div>
<div class="t" style="left:278.30px;top:461.00px;font-size:6.4px;line-height:6.4px;color:#000;font-family:'Liberation Mono', monospace;font-weight:normal;transform:scaleX(0.83);transform-origin:0 0;-webkit-text-stroke:0.12px #000;">Valley 11</div>
<div class="t" style="left:332.00px;top:461.00px;font-size:6.4px;line-height:6.4px;color:#222;font-family:'Liberation Mono', monospace;font-weight:normal;transform:scaleX(0.83);transform-origin:0 0;-webkit-text-stroke:0;">25282347</div>
<div class="t" style="left:386.40px;top:461.00px;font-size:6.4px;line-height:6.4px;color:#222;font-family:'Liberation Mono', monospace;font-weight:normal;transform:scaleX(0.83);transform-origin:0 0;-webkit-text-stroke:0;">-70.958</div>
<div class="r" style="left:275.30px;top:381.30px;width:252.60px;height:0.70px;background:#e2e2e2;"></div>
<div class="r" style="left:275.30px;top:398.65px;width:252.60px;height:0.70px;background:#e2e2e2;"></div>
<div class="r" style="left:275.30px;top:416.00px;width:252.60px;height:0.70px;background:#e2e2e2;"></div>
<div class="r" style="left:275.30px;top:433.35px;width:252.60px;height:0.70px;background:#e2e2e2;"></div>
<div class="r" style="left:275.30px;top:450.70px;width:252.60px;height:0.70px;background:#e2e2e2;"></div>
<div class="r" style="left:328.50px;top:352.00px;width:0.60px;height:111.60px;background:#f6f6f6;"></div>
<div class="r" style="left:383.40px;top:352.00px;width:0.60px;height:111.60px;background:#e8e8e8;"></div>
</div></div>
<div class="r" style="left:264.00px;top:352.00px;width:9.20px;height:111.60px;background:#f0f0f0;"></div>
<div class="r" style="left:264.80px;top:361.40px;width:7.60px;height:9.10px;background:#cdcdcd;"></div>
<div class="t" style="left:68.60px;width:400px;text-align:center;top:353.00px;font-size:6px;line-height:6px;color:#444;font-family:'Liberation Sans', sans-serif;font-weight:normal;">˄</div>
<div class="t" style="left:68.60px;width:400px;text-align:center;top:456.00px;font-size:6px;line-height:6px;color:#444;font-family:'Liberation Sans', sans-serif;font-weight:normal;">˅</div>
<div class="r" style="left:9.40px;top:463.60px;width:254.60px;height:8.90px;background:#f0f0f0;"></div>
<div class="r" style="left:19.00px;top:464.60px;width:222.80px;height:6.90px;background:#cdcdcd;"></div>
<div class="t" style="left:13.00px;top:465.00px;font-size:7px;line-height:7px;color:#444;font-family:'Liberation Sans', sans-serif;font-weight:normal;">‹</div>
<div class="t" style="left:259.40px;top:465.00px;font-size:7px;line-height:7px;color:#444;font-family:'Liberation Sans', sans-serif;font-weight:normal;">›</div>
<div class="r" style="left:264.00px;top:463.60px;width:9.20px;height:8.90px;background:#f0f0f0;"></div>
<div class="r" style="left:527.90px;top:352.00px;width:8.90px;height:111.60px;background:#f0f0f0;"></div>
<div class="r" style="left:528.70px;top:361.00px;width:7.30px;height:12.60px;background:#cdcdcd;"></div>
<div class="t" style="left:332.35px;width:400px;text-align:center;top:353.00px;font-size:6px;line-height:6px;color:#444;font-family:'Liberation Sans', sans-serif;font-weight:normal;">˄</div>
<div class="t" style="left:332.35px;width:400px;text-align:center;top:456.00px;font-size:6px;line-height:6px;color:#444;font-family:'Liberation Sans', sans-serif;font-weight:normal;">˅</div>
<div class="r" style="left:275.40px;top:463.60px;width:252.50px;height:8.90px;background:#f0f0f0;"></div>
<div class="r" style="left:285.00px;top:464.60px;width:217.80px;height:6.90px;background:#cdcdcd;"></div>
<div class="t" style="left:279.00px;top:465.00px;font-size:7px;line-height:7px;color:#444;font-family:'Liberation Sans', sans-serif;font-weight:normal;">‹</div>
<div class="t" style="left:523.00px;top:465.00px;font-size:7px;line-height:7px;color:#444;font-family:'Liberation Sans', sans-serif;font-weight:normal;">›</div>
<div class="r" style="left:527.90px;top:463.60px;width:8.90px;height:8.90px;background:#f0f0f0;"></div>
<div class="r" style="left:9.40px;top:472.50px;width:637.00px;height:11.80px;background:#f0f0f0;"></div>
<div class="r" style="left:8.00px;top:484.30px;width:640.00px;height:1.70px;background:#50565c;"></div>
<svg style="left:12px;top:474px" width="8" height="8" viewBox="0 0 8 8"><path d="M1 7L4 4M3.5 2.5L5.5 0.8L7.2 2.5L5.5 4.5Z" stroke="#808890" stroke-width="1.2" fill="#a0a8b0"/></svg>
<div class="t" style="left:28.00px;top:476.00px;font-size:6px;line-height:6px;color:#3a3ab0;font-family:'Liberation Sans', sans-serif;font-weight:normal;">Connected</div>
<div class="t" style="left:581.00px;top:477.00px;font-size:5.6px;line-height:5.6px;color:#222;font-family:'Liberation Sans', sans-serif;font-weight:normal;">27-05-2017   10:45</div>
</body></html>
